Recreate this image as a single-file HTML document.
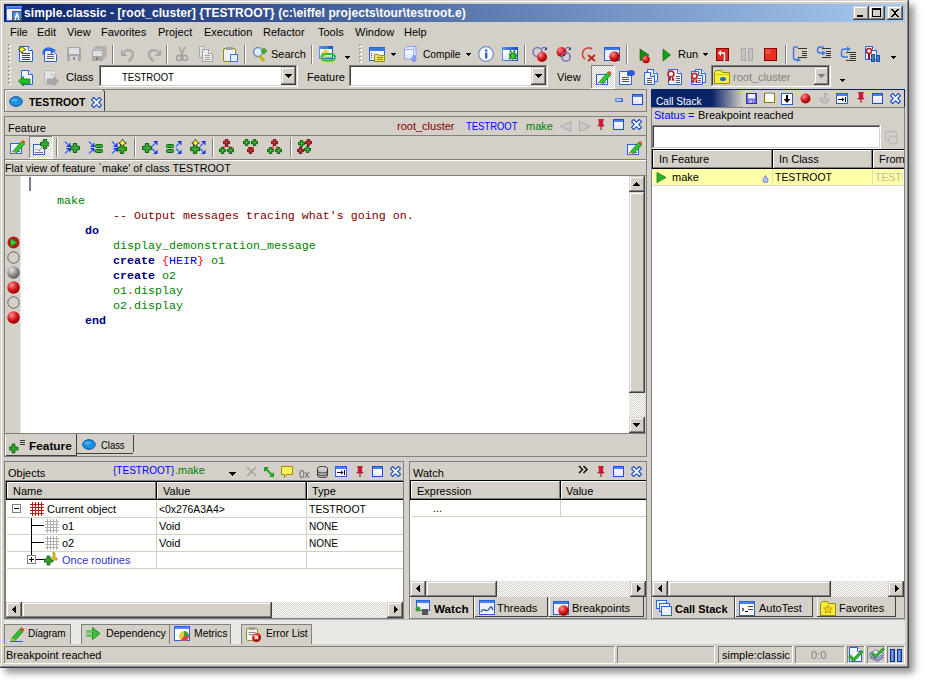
<!DOCTYPE html>
<html><head><meta charset="utf-8"><style>
html,body{margin:0;padding:0;background:#fff;width:925px;height:684px;overflow:hidden;position:relative}
body>div,body>span{position:absolute}
div>span.t{position:absolute}
.t{position:absolute;white-space:pre;line-height:13px;font-family:'Liberation Sans',sans-serif}
.t b{font-weight:bold}
</style></head><body>
<div style="left:6px;top:6px;width:903px;height:662px;box-shadow:2px 2px 7px 3px rgba(0,0,0,0.42);background:rgba(0,0,0,0.42)"></div>
<div style="left:0px;top:0px;width:909px;height:668px;background:#d4d0c8"></div>
<div style="left:0px;top:0px;width:909px;height:1px;background:#d4d0c8"></div>
<div style="left:0px;top:0px;width:1px;height:668px;background:#d4d0c8"></div>
<div style="left:0px;top:667px;width:909px;height:1px;background:#404040"></div>
<div style="left:908px;top:0px;width:1px;height:668px;background:#404040"></div>
<div style="left:1px;top:1px;width:907px;height:1px;background:#ffffff"></div>
<div style="left:1px;top:1px;width:1px;height:666px;background:#ffffff"></div>
<div style="left:1px;top:666px;width:907px;height:1px;background:#808080"></div>
<div style="left:907px;top:1px;width:1px;height:666px;background:#808080"></div>
<div style="left:4px;top:4px;width:901px;height:18px;background:linear-gradient(to right,#0a246a,#a6caf0)"></div>
<svg style="position:absolute;left:6px;top:6px" width="16" height="15" viewBox="0 0 16 15"><defs><linearGradient id="tig" x1="0" y1="0" x2="0" y2="1"><stop offset="0" stop-color="#6a9af8"/><stop offset="1" stop-color="#2a5ad8"/></linearGradient></defs><rect x="0" y="0" width="16" height="15" fill="#3a70e8"/><rect x="0" y="0" width="16" height="3" fill="url(#tig)"/><rect x="1" y="3" width="14" height="11" fill="#f0f0ff"/><rect x="6.5" y="5.5" width="9" height="9" fill="#4a90e8" stroke="#505050"/><path d="M11 6l-3.5 8h2l1.5-4 1.5 4h2z" fill="#fff"/><path d="M7 14l2-2M15 14l-2-2" stroke="#203050" stroke-width="1"/></svg>
<span class="t" style="left:24px;top:7px;font-size:12px;font-weight:bold;color:#fff;letter-spacing:0.08px">simple.classic - [root_cluster] {TESTROOT} (c:\eiffel projects\tour\testroot.e)</span>
<div style="left:853px;top:6px;width:16px;height:14px;background:#d4d0c8"></div>
<div style="left:853px;top:6px;width:16px;height:1px;background:#d4d0c8"></div>
<div style="left:853px;top:6px;width:1px;height:14px;background:#d4d0c8"></div>
<div style="left:853px;top:19px;width:16px;height:1px;background:#404040"></div>
<div style="left:868px;top:6px;width:1px;height:14px;background:#404040"></div>
<div style="left:854px;top:7px;width:14px;height:1px;background:#ffffff"></div>
<div style="left:854px;top:7px;width:1px;height:12px;background:#ffffff"></div>
<div style="left:854px;top:18px;width:14px;height:1px;background:#808080"></div>
<div style="left:867px;top:7px;width:1px;height:12px;background:#808080"></div>
<div style="left:869px;top:6px;width:16px;height:14px;background:#d4d0c8"></div>
<div style="left:869px;top:6px;width:16px;height:1px;background:#d4d0c8"></div>
<div style="left:869px;top:6px;width:1px;height:14px;background:#d4d0c8"></div>
<div style="left:869px;top:19px;width:16px;height:1px;background:#404040"></div>
<div style="left:884px;top:6px;width:1px;height:14px;background:#404040"></div>
<div style="left:870px;top:7px;width:14px;height:1px;background:#ffffff"></div>
<div style="left:870px;top:7px;width:1px;height:12px;background:#ffffff"></div>
<div style="left:870px;top:18px;width:14px;height:1px;background:#808080"></div>
<div style="left:883px;top:7px;width:1px;height:12px;background:#808080"></div>
<div style="left:887px;top:6px;width:16px;height:14px;background:#d4d0c8"></div>
<div style="left:887px;top:6px;width:16px;height:1px;background:#d4d0c8"></div>
<div style="left:887px;top:6px;width:1px;height:14px;background:#d4d0c8"></div>
<div style="left:887px;top:19px;width:16px;height:1px;background:#404040"></div>
<div style="left:902px;top:6px;width:1px;height:14px;background:#404040"></div>
<div style="left:888px;top:7px;width:14px;height:1px;background:#ffffff"></div>
<div style="left:888px;top:7px;width:1px;height:12px;background:#ffffff"></div>
<div style="left:888px;top:18px;width:14px;height:1px;background:#808080"></div>
<div style="left:901px;top:7px;width:1px;height:12px;background:#808080"></div>
<div style="left:857px;top:15px;width:6px;height:2px;background:#000"></div>
<div style="left:872px;top:8px;width:9px;height:1px;background:#000"></div>
<div style="left:872px;top:8px;width:1px;height:9px;background:#000"></div>
<div style="left:872px;top:16px;width:9px;height:1px;background:#000"></div>
<div style="left:880px;top:8px;width:1px;height:9px;background:#000"></div>
<div style="left:872px;top:9px;width:9px;height:1px;background:#000"></div>
<svg style="position:absolute;left:890px;top:8px" width="10" height="10" viewBox="0 0 10 10" shape-rendering="crispEdges"><path d="M1 1h2v1h1v1h2v-1h1v-1h2v1h-1v1h-1v1h-1v2h1v1h1v1h1v1h-2v-1h-1v-1h-2v1h-1v1h-2v-1h1v-1h1v-1h1v-2h-1v-1h-1v-1h-1z" fill="#000"/></svg>
<span class="t" style="left:10px;top:26px;font-size:11px;color:#000;">File</span>
<span class="t" style="left:37px;top:26px;font-size:11px;color:#000;">Edit</span>
<span class="t" style="left:67px;top:26px;font-size:11px;color:#000;">View</span>
<span class="t" style="left:101px;top:26px;font-size:11px;color:#000;">Favorites</span>
<span class="t" style="left:158px;top:26px;font-size:11px;color:#000;">Project</span>
<span class="t" style="left:204px;top:26px;font-size:11px;color:#000;">Execution</span>
<span class="t" style="left:263px;top:26px;font-size:11px;color:#000;">Refactor</span>
<span class="t" style="left:318px;top:26px;font-size:11px;color:#000;">Tools</span>
<span class="t" style="left:355px;top:26px;font-size:11px;color:#000;">Window</span>
<span class="t" style="left:404px;top:26px;font-size:11px;color:#000;">Help</span>
<svg style="position:absolute;left:8px;top:44px" width="3" height="20" viewBox="0 0 3 20" shape-rendering="crispEdges"><rect x="1" y="1" width="2" height="2" fill="#fff"/><rect x="1" y="1" width="1" height="1" fill="#fff"/><rect x="0" y="0" width="2" height="2" fill="#a0a0a0"/><rect x="1" y="1" width="1" height="1" fill="#d4d0c8"/><rect x="1" y="5" width="2" height="2" fill="#fff"/><rect x="1" y="5" width="1" height="1" fill="#fff"/><rect x="0" y="4" width="2" height="2" fill="#a0a0a0"/><rect x="1" y="5" width="1" height="1" fill="#d4d0c8"/><rect x="1" y="9" width="2" height="2" fill="#fff"/><rect x="1" y="9" width="1" height="1" fill="#fff"/><rect x="0" y="8" width="2" height="2" fill="#a0a0a0"/><rect x="1" y="9" width="1" height="1" fill="#d4d0c8"/><rect x="1" y="13" width="2" height="2" fill="#fff"/><rect x="1" y="13" width="1" height="1" fill="#fff"/><rect x="0" y="12" width="2" height="2" fill="#a0a0a0"/><rect x="1" y="13" width="1" height="1" fill="#d4d0c8"/><rect x="1" y="17" width="2" height="2" fill="#fff"/><rect x="1" y="17" width="1" height="1" fill="#fff"/><rect x="0" y="16" width="2" height="2" fill="#a0a0a0"/><rect x="1" y="17" width="1" height="1" fill="#d4d0c8"/></svg>
<svg style="position:absolute;left:18px;top:46px" width="16" height="16" viewBox="0 0 16 16"><path d="M1.5 0.5h9l4 4v11h-13z" fill="#f4f4ff" stroke="#2a62d8" stroke-width="1"/><path d="M10.5 0.5v4h4" fill="#fff" stroke="#2a62d8" stroke-width="1"/><rect x="4" y="7" width="8" height="1" fill="#404040"/><rect x="4" y="9" width="8" height="1" fill="#404040"/><rect x="4" y="11" width="8" height="1" fill="#404040"/><rect x="4" y="13" width="8" height="1" fill="#404040"/><path d="M4 -0.2999999999999998Q4.8 2.7 7.8 3.5Q4.8 4.3 4 7.3Q3.2 4.3 0.20000000000000018 3.5Q3.2 2.7 4 -0.2999999999999998z" fill="#ffff30" stroke="#303000" stroke-width=".8"/></svg>
<svg style="position:absolute;left:42px;top:46px" width="16" height="16" viewBox="0 0 16 16"><path d="M2.5 4.5h8l4 4v7h-12z" fill="#f4f4ff" stroke="#2a62d8" stroke-width="1"/><rect x="5" y="8" width="7" height="1" fill="#606060"/><rect x="5" y="10" width="7" height="1" fill="#606060"/><rect x="5" y="12" width="7" height="1" fill="#606060"/><path d="M1.8 8.5C1 3 6 1 10 4" fill="none" stroke="#2a6ae8" stroke-width="2.6"/><path d="M8 1.5l6 2.5-5 4.5z" fill="#2a6ae8"/></svg>
<svg style="position:absolute;left:66px;top:46px" width="16" height="16" viewBox="0 0 16 16"><rect x="1" y="1" width="14" height="14" rx="1" fill="#a8a8a8"/><rect x="3" y="2" width="10" height="6" fill="#e0e0e0"/><rect x="4" y="10" width="8" height="5" fill="#d0d0d0"/><rect x="7" y="11" width="2" height="3" fill="#909090"/></svg>
<svg style="position:absolute;left:91px;top:46px" width="16" height="16" viewBox="0 0 16 16"><rect x="5" y="0" width="10" height="10" fill="#c8c8c8" stroke="#a0a0a0"/><rect x="3" y="2" width="10" height="10" fill="#c8c8c8" stroke="#a0a0a0"/><rect x="1" y="4" width="11" height="11" fill="#a8a8a8"/><rect x="2" y="5" width="9" height="5" fill="#e0e0e0"/><rect x="5" y="11" width="2" height="3" fill="#808080"/></svg>
<div style="left:112px;top:45px;width:1px;height:19px;background:#808080"></div>
<div style="left:113px;top:45px;width:1px;height:19px;background:#ffffff"></div>
<svg style="position:absolute;left:120px;top:46px" width="16" height="16" viewBox="0 0 16 16"><g><path d="M4 5.5C10 2 15 6 12 11.5 11 13 10 14 8.5 15" fill="none" stroke="#a8a8a8" stroke-width="2.4"/><path d="M1 3.5v6.5h6.5z" fill="#a8a8a8"/></g></svg>
<svg style="position:absolute;left:146px;top:46px" width="16" height="16" viewBox="0 0 16 16"><g transform="translate(16,0) scale(-1,1)"><path d="M4 5.5C10 2 15 6 12 11.5 11 13 10 14 8.5 15" fill="none" stroke="#a8a8a8" stroke-width="2.4"/><path d="M1 3.5v6.5h6.5z" fill="#a8a8a8"/></g></svg>
<div style="left:166px;top:45px;width:1px;height:19px;background:#808080"></div>
<div style="left:167px;top:45px;width:1px;height:19px;background:#ffffff"></div>
<svg style="position:absolute;left:174px;top:46px" width="16" height="16" viewBox="0 0 16 16"><path d="M5 1l4 9M11 1L7 10" stroke="#a0a0a0" stroke-width="1.5"/><circle cx="5" cy="12" r="2.5" fill="none" stroke="#a0a0a0" stroke-width="1.5"/><circle cx="11" cy="12" r="2.5" fill="none" stroke="#a0a0a0" stroke-width="1.5"/></svg>
<svg style="position:absolute;left:198px;top:46px" width="16" height="16" viewBox="0 0 16 16"><path d="M1.5 0.5h5l4 4v7h-9z" fill="#e4e4e4" stroke="#a8a8a8" stroke-width="1"/><path d="M6.5 0.5v4h4" fill="#fff" stroke="#a8a8a8" stroke-width="1"/><path d="M4.5 3.5h6l4 4v8h-10z" fill="#e8e8e8" stroke="#a0a0a0" stroke-width="1"/><path d="M10.5 3.5v4h4" fill="#fff" stroke="#a0a0a0" stroke-width="1"/><rect x="7" y="9" width="5" height="1" fill="#a0a0a0"/><rect x="7" y="11" width="5" height="1" fill="#a0a0a0"/><rect x="7" y="13" width="5" height="1" fill="#a0a0a0"/></svg>
<svg style="position:absolute;left:222px;top:46px" width="16" height="16" viewBox="0 0 16 16"><rect x="1.5" y="2.5" width="12" height="13" rx="1.5" fill="#f0f0f0" stroke="#8a8a00"/><rect x="4" y="1" width="7" height="3" fill="#a0a0a0"/><rect x="8.5" y="8.5" width="7" height="7" fill="#e8eefc" stroke="#3a7ae8"/></svg>
<div style="left:244px;top:45px;width:1px;height:19px;background:#808080"></div>
<div style="left:245px;top:45px;width:1px;height:19px;background:#ffffff"></div>
<svg style="position:absolute;left:252px;top:46px" width="16" height="16" viewBox="0 0 16 16"><circle cx="6" cy="6" r="4.5" fill="#d8ecff" stroke="#7090b0" stroke-width="1.5"/><path d="M8 10l4 5" stroke="#c8b400" stroke-width="3"/><path d="M9 5h6M12 2v6" stroke="#4aa020" stroke-width="2.6"/></svg>
<span class="t" style="left:271px;top:48px;font-size:11px;color:#000;">Search</span>
<div style="left:311px;top:45px;width:1px;height:19px;background:#808080"></div>
<div style="left:312px;top:45px;width:1px;height:19px;background:#ffffff"></div>
<svg style="position:absolute;left:316px;top:44px" width="20" height="18" viewBox="0 0 20 18"><defs><linearGradient id="g1" x1="0" y1="0" x2="1" y2="0"><stop offset="0" stop-color="#5a90f0"/><stop offset="1" stop-color="#1a50d0"/></linearGradient></defs><defs><linearGradient id="g2" x1="0" y1="0" x2="0" y2="1"><stop offset="0" stop-color="#ffffff"/><stop offset="1" stop-color="#e0e4ff"/></linearGradient></defs><rect x="3" y="2" width="14" height="13" fill="url(#g1)"/><rect x="4" y="5" width="12" height="9" fill="url(#g2)"/><path d="M11.5 3L6 9.5h3L6.5 15l6-7h-3z" fill="#fff020" stroke="#b09000" stroke-width=".5"/><rect x="5.5" y="10" width="13.5" height="6.5" rx="3.2" fill="none" stroke="#30c030" stroke-width="2"/><rect x="9" y="12.6" width="6.5" height="1.4" fill="#60e060"/></svg>
<svg style="position:absolute;left:345px;top:56px" width="5" height="3" viewBox="0 0 5 3" shape-rendering="crispEdges"><path d="M0 0h5v1h-1v1h-1v1h-1v-1h-1v-1h-1z" fill="#000"/></svg>
<svg style="position:absolute;left:359px;top:44px" width="3" height="20" viewBox="0 0 3 20" shape-rendering="crispEdges"><rect x="1" y="1" width="2" height="2" fill="#fff"/><rect x="1" y="1" width="1" height="1" fill="#fff"/><rect x="0" y="0" width="2" height="2" fill="#a0a0a0"/><rect x="1" y="1" width="1" height="1" fill="#d4d0c8"/><rect x="1" y="5" width="2" height="2" fill="#fff"/><rect x="1" y="5" width="1" height="1" fill="#fff"/><rect x="0" y="4" width="2" height="2" fill="#a0a0a0"/><rect x="1" y="5" width="1" height="1" fill="#d4d0c8"/><rect x="1" y="9" width="2" height="2" fill="#fff"/><rect x="1" y="9" width="1" height="1" fill="#fff"/><rect x="0" y="8" width="2" height="2" fill="#a0a0a0"/><rect x="1" y="9" width="1" height="1" fill="#d4d0c8"/><rect x="1" y="13" width="2" height="2" fill="#fff"/><rect x="1" y="13" width="1" height="1" fill="#fff"/><rect x="0" y="12" width="2" height="2" fill="#a0a0a0"/><rect x="1" y="13" width="1" height="1" fill="#d4d0c8"/><rect x="1" y="17" width="2" height="2" fill="#fff"/><rect x="1" y="17" width="1" height="1" fill="#fff"/><rect x="0" y="16" width="2" height="2" fill="#a0a0a0"/><rect x="1" y="17" width="1" height="1" fill="#d4d0c8"/></svg>
<svg style="position:absolute;left:369px;top:46px" width="16" height="16" viewBox="0 0 16 16"><rect x="0.5" y="1.5" width="15" height="13" fill="#f4f4ff" stroke="#2a62d8"/><rect x="1" y="2" width="15" height="3" fill="#3a7ae8"/><rect x="2" y="7" width="1" height="1" fill="#444"/><rect x="2" y="9" width="1" height="1" fill="#444"/><rect x="2" y="11" width="1" height="1" fill="#444"/><path d="M5.5 8.5h4l1 1h5v6h-10z" fill="#f0e060" stroke="#909000"/><rect x="8" y="11" width="6" height="1" fill="#909000"/><rect x="8" y="13" width="6" height="1" fill="#909000"/></svg>
<svg style="position:absolute;left:391px;top:53px" width="5" height="3" viewBox="0 0 5 3" shape-rendering="crispEdges"><path d="M0 0h5v1h-1v1h-1v1h-1v-1h-1v-1h-1z" fill="#000"/></svg>
<svg style="position:absolute;left:400px;top:45px" width="18" height="17" viewBox="0 0 18 17"><path d="M4.5 3.5l2.5-2h9v9.5l-3 3H4.5z" fill="#e4ecff" stroke="#8c9cf8"/><path d="M4.5 4.5h9v9.5M13.5 4.5l3-3" fill="none" stroke="#a0aef8"/><path d="M5 5h8v4H5z" fill="#f4f8ff"/><path d="M14 10c-1.5 2-2.2 3-2.2 4.2a2.2 2.2 0 0 0 4.4 0c0-1.2-.7-2.2-2.2-4.2z" fill="#8ca0ff" stroke="#5a6ae0" stroke-width=".6"/></svg>
<span class="t" style="left:423px;top:48px;font-size:11px;color:#000;transform:scaleX(0.9250);transform-origin:0 0;">Compile</span>
<svg style="position:absolute;left:466px;top:53px" width="5" height="3" viewBox="0 0 5 3" shape-rendering="crispEdges"><path d="M0 0h5v1h-1v1h-1v1h-1v-1h-1v-1h-1z" fill="#000"/></svg>
<svg style="position:absolute;left:478px;top:46px" width="16" height="16" viewBox="0 0 16 16"><circle cx="8" cy="8" r="7.3" fill="#fff" stroke="#6a8ac8" stroke-width="1.2"/><rect x="7" y="6.5" width="2.4" height="6" fill="#3a5ac8"/><rect x="7" y="3.5" width="2.4" height="2" fill="#3a5ac8"/></svg>
<svg style="position:absolute;left:502px;top:46px" width="16" height="16" viewBox="0 0 16 16"><defs><linearGradient id="g3" x1="0" y1="0" x2="1" y2="0"><stop offset="0" stop-color="#5a90f0"/><stop offset="1" stop-color="#1a50d0"/></linearGradient></defs><defs><linearGradient id="g4" x1="0" y1="0" x2="0" y2="1"><stop offset="0" stop-color="#ffffff"/><stop offset="1" stop-color="#e0e4ff"/></linearGradient></defs><rect x="0" y="1" width="16" height="14" fill="url(#g3)"/><rect x="1" y="4" width="14" height="10" fill="url(#g4)"/><path d="M8 4.5l1.5 2M13 4.5l-1.5 2M7 7.5l2 1.5M14.5 7.5l-2 1.5M7 10h2M13 10h2M7 13l2-1.5M14.5 13l-2-1.5" stroke="#0a700a" stroke-width="1.5"/><ellipse cx="11" cy="10" rx="2.6" ry="3.2" fill="#38c838" stroke="#0a700a" stroke-width=".8"/></svg>
<div style="left:524px;top:45px;width:1px;height:19px;background:#808080"></div>
<div style="left:525px;top:45px;width:1px;height:19px;background:#ffffff"></div>
<svg style="position:absolute;left:532px;top:46px" width="16" height="16" viewBox="0 0 16 16"><circle cx="5.5" cy="6" r="4.5" fill="none" stroke="#7a70c0" stroke-width="1.6"/><defs><radialGradient id="g5" cx="35%" cy="30%" r="70%"><stop offset="0" stop-color="#ff9090"/><stop offset="0.6" stop-color="#d41818"/><stop offset="1" stop-color="#980000"/></radialGradient></defs><circle cx="10" cy="11" r="5" fill="url(#g5)"/><path d="M10 2.5c1.5-1.5 3.5-1.5 4.5 .5" fill="none" stroke="#204890" stroke-width="1"/><path d="M15 1v3h-3z" fill="#204890"/></svg>
<svg style="position:absolute;left:556px;top:46px" width="16" height="16" viewBox="0 0 16 16"><defs><radialGradient id="g6" cx="35%" cy="30%" r="70%"><stop offset="0" stop-color="#ff9090"/><stop offset="0.6" stop-color="#d41818"/><stop offset="1" stop-color="#980000"/></radialGradient></defs><circle cx="5.5" cy="6" r="5" fill="url(#g6)"/><circle cx="10" cy="11" r="4.2" fill="none" stroke="#7a70c0" stroke-width="1.6"/><path d="M10 2.5c1.5-1.5 3.5-1.5 4.5 .5" fill="none" stroke="#204890" stroke-width="1"/><path d="M15 1v3h-3z" fill="#204890"/></svg>
<svg style="position:absolute;left:580px;top:46px" width="16" height="16" viewBox="0 0 16 16"><path d="M12 3A6 6 0 1 0 5 13" fill="none" stroke="#d84040" stroke-width="1.6"/><path d="M8 9l7 6M15 9l-7 6" stroke="#c02020" stroke-width="1.8"/></svg>
<svg style="position:absolute;left:604px;top:46px" width="16" height="16" viewBox="0 0 16 16"><rect x="0.5" y="1.5" width="15" height="13" fill="#eef0ff" stroke="#2a62d8"/><rect x="1" y="2" width="14" height="2" fill="#3a7ae8"/><defs><radialGradient id="g7" cx="35%" cy="30%" r="70%"><stop offset="0" stop-color="#ff9090"/><stop offset="0.6" stop-color="#d41818"/><stop offset="1" stop-color="#980000"/></radialGradient></defs><circle cx="10.5" cy="10.5" r="5.2" fill="url(#g7)"/></svg>
<div style="left:626px;top:45px;width:1px;height:19px;background:#808080"></div>
<div style="left:627px;top:45px;width:1px;height:19px;background:#ffffff"></div>
<svg style="position:absolute;left:639px;top:48px" width="16" height="16" viewBox="0 0 16 16"><path d="M1 1v12l9-6z" fill="#109010" stroke="#006000" stroke-width=".6"/><defs><radialGradient id="g8" cx="35%" cy="30%" r="70%"><stop offset="0" stop-color="#ff9090"/><stop offset="0.6" stop-color="#d41818"/><stop offset="1" stop-color="#980000"/></radialGradient></defs><circle cx="7" cy="11.5" r="3.8" fill="url(#g8)"/></svg>
<svg style="position:absolute;left:662px;top:48px" width="16" height="16" viewBox="0 0 16 16"><path d="M1 1v12l7.5-6z" fill="#10a010" stroke="#006000" stroke-width=".6"/></svg>
<span class="t" style="left:678px;top:48px;font-size:11px;color:#000;">Run</span>
<svg style="position:absolute;left:703px;top:53px" width="5" height="3" viewBox="0 0 5 3" shape-rendering="crispEdges"><path d="M0 0h5v1h-1v1h-1v1h-1v-1h-1v-1h-1z" fill="#000"/></svg>
<svg style="position:absolute;left:716px;top:48px" width="14" height="14" viewBox="0 0 14 14"><rect x="0.5" y="0.5" width="12" height="12" fill="#e02a20" stroke="#900000"/><path d="M8.5 13V5H4" fill="none" stroke="#fff" stroke-width="1.4"/><path d="M2 5l3-3v6z" fill="#fff"/></svg>
<svg style="position:absolute;left:741px;top:48px" width="13" height="13" viewBox="0 0 13 13"><rect x="0.5" y="0.5" width="4" height="12" fill="#c4c4c4" stroke="#a8a8a8"/><rect x="7.5" y="0.5" width="4" height="12" fill="#c4c4c4" stroke="#a8a8a8"/></svg>
<svg style="position:absolute;left:764px;top:48px" width="14" height="14" viewBox="0 0 14 14"><rect x="0.5" y="0.5" width="12" height="12" fill="#e83020" stroke="#900000"/><rect x="1" y="1" width="6" height="5" fill="#f06050" opacity=".6"/></svg>
<div style="left:785px;top:45px;width:1px;height:19px;background:#808080"></div>
<div style="left:786px;top:45px;width:1px;height:19px;background:#ffffff"></div>
<svg style="position:absolute;left:792px;top:46px" width="16" height="16" viewBox="0 0 16 16"><path d="M6 1H2.5Q1.5 1 1.5 2.5v9Q1.5 14 4 14h3" fill="none" stroke="#3a7ae8" stroke-width="1.4"/><path d="M5 11.5l4 2.5-4 2z" fill="#3a7ae8"/><rect x="6" y="2" width="9" height="1" fill="#333"/><rect x="10" y="5" width="5" height="1" fill="#333"/><rect x="10" y="7" width="5" height="1" fill="#333"/><rect x="10" y="9" width="5" height="1" fill="#333"/><rect x="6" y="11" width="9" height="1" fill="#333"/></svg>
<svg style="position:absolute;left:816px;top:46px" width="16" height="16" viewBox="0 0 16 16"><path d="M8 1H4Q1.5 1 1.5 4t2.5 3h4" fill="none" stroke="#3a7ae8" stroke-width="1.4"/><path d="M6 4.5l4 2.5-4 2.5z" fill="#3a7ae8"/><rect x="6" y="2" width="9" height="1" fill="#333"/><rect x="10" y="5" width="5" height="1" fill="#333"/><rect x="10" y="7" width="5" height="1" fill="#333"/><rect x="10" y="9" width="5" height="1" fill="#333"/><rect x="6" y="11" width="9" height="1" fill="#333"/></svg>
<svg style="position:absolute;left:840px;top:46px" width="16" height="16" viewBox="0 0 16 16"><path d="M8 3H4Q1.5 3 1.5 6v3Q1.5 11 4 11h4" fill="none" stroke="#3a7ae8" stroke-width="1.4"/><path d="M7 0.5l4 2.5-4 2.5z" fill="#3a7ae8"/><rect x="6" y="6" width="10" height="1" fill="#333"/><rect x="10" y="8" width="6" height="1" fill="#333"/><rect x="10" y="10" width="6" height="1" fill="#333"/><rect x="10" y="12" width="6" height="1" fill="#333"/><rect x="6" y="14" width="10" height="1" fill="#333"/></svg>
<svg style="position:absolute;left:865px;top:46px" width="16" height="16" viewBox="0 0 16 16"><path d="M0.5 0.5h7l4 4v9h-11z" fill="#f4f4ff" stroke="#2a62d8" stroke-width="1"/><path d="M7.5 0.5v4h4" fill="#fff" stroke="#2a62d8" stroke-width="1"/><circle cx="4" cy="5" r="2.5" fill="#fff" stroke="#b02020" stroke-width="1.5"/><path d="M4 7v6" stroke="#901818" stroke-width="2"/><rect x="6.5" y="8.5" width="3" height="7" fill="#3a80d0" stroke="#1a50a0"/><rect x="11.5" y="9.5" width="3" height="6" fill="#3a80d0" stroke="#1a50a0"/></svg>
<svg style="position:absolute;left:891px;top:56px" width="5" height="3" viewBox="0 0 5 3" shape-rendering="crispEdges"><path d="M0 0h5v1h-1v1h-1v1h-1v-1h-1v-1h-1z" fill="#000"/></svg>
<svg style="position:absolute;left:8px;top:66px" width="3" height="20" viewBox="0 0 3 20" shape-rendering="crispEdges"><rect x="1" y="1" width="2" height="2" fill="#fff"/><rect x="1" y="1" width="1" height="1" fill="#fff"/><rect x="0" y="0" width="2" height="2" fill="#a0a0a0"/><rect x="1" y="1" width="1" height="1" fill="#d4d0c8"/><rect x="1" y="5" width="2" height="2" fill="#fff"/><rect x="1" y="5" width="1" height="1" fill="#fff"/><rect x="0" y="4" width="2" height="2" fill="#a0a0a0"/><rect x="1" y="5" width="1" height="1" fill="#d4d0c8"/><rect x="1" y="9" width="2" height="2" fill="#fff"/><rect x="1" y="9" width="1" height="1" fill="#fff"/><rect x="0" y="8" width="2" height="2" fill="#a0a0a0"/><rect x="1" y="9" width="1" height="1" fill="#d4d0c8"/><rect x="1" y="13" width="2" height="2" fill="#fff"/><rect x="1" y="13" width="1" height="1" fill="#fff"/><rect x="0" y="12" width="2" height="2" fill="#a0a0a0"/><rect x="1" y="13" width="1" height="1" fill="#d4d0c8"/><rect x="1" y="17" width="2" height="2" fill="#fff"/><rect x="1" y="17" width="1" height="1" fill="#fff"/><rect x="0" y="16" width="2" height="2" fill="#a0a0a0"/><rect x="1" y="17" width="1" height="1" fill="#d4d0c8"/></svg>
<svg style="position:absolute;left:18px;top:70px" width="16" height="16" viewBox="0 0 16 16"><path d="M3.5 0.5h7l4 4v10h-11z" fill="#f4f4ff" stroke="#2a62d8" stroke-width="1"/><path d="M10.5 0.5v4h4" fill="#fff" stroke="#2a62d8" stroke-width="1"/><path d="M.5 11L5.5 6.5V9H12v4.5H5.5V16z" fill="#20c020" stroke="#0a800a" stroke-width=".8"/></svg>
<svg style="position:absolute;left:43px;top:70px" width="16" height="16" viewBox="0 0 16 16"><path d="M1.5 0.5h7l4 4v10h-11z" fill="#e4e4e4" stroke="#b8b8b8" stroke-width="1"/><path d="M8.5 0.5v4h4" fill="#fff" stroke="#b8b8b8" stroke-width="1"/><path d="M15.5 11L10.5 6.5V9H4v4.5h6.5V16z" fill="#a8a8a8" stroke="#a0a0a0" stroke-width=".8"/></svg>
<span class="t" style="left:66px;top:71px;font-size:11px;color:#000;">Class</span>
<div style="left:99px;top:65px;width:199px;height:22px;background:#fff"></div>
<div style="left:99px;top:65px;width:199px;height:1px;background:#808080"></div>
<div style="left:99px;top:65px;width:1px;height:22px;background:#808080"></div>
<div style="left:99px;top:86px;width:199px;height:1px;background:#ffffff"></div>
<div style="left:297px;top:65px;width:1px;height:22px;background:#ffffff"></div>
<div style="left:100px;top:66px;width:197px;height:1px;background:#404040"></div>
<div style="left:100px;top:66px;width:1px;height:20px;background:#404040"></div>
<div style="left:100px;top:85px;width:197px;height:1px;background:#d4d0c8"></div>
<div style="left:296px;top:66px;width:1px;height:20px;background:#d4d0c8"></div>
<div style="left:281px;top:67px;width:15px;height:18px;background:#d4d0c8"></div>
<div style="left:281px;top:67px;width:15px;height:1px;background:#d4d0c8"></div>
<div style="left:281px;top:67px;width:1px;height:18px;background:#d4d0c8"></div>
<div style="left:281px;top:84px;width:15px;height:1px;background:#404040"></div>
<div style="left:295px;top:67px;width:1px;height:18px;background:#404040"></div>
<div style="left:282px;top:68px;width:13px;height:1px;background:#ffffff"></div>
<div style="left:282px;top:68px;width:1px;height:16px;background:#ffffff"></div>
<div style="left:282px;top:83px;width:13px;height:1px;background:#808080"></div>
<div style="left:294px;top:68px;width:1px;height:16px;background:#808080"></div>
<svg style="position:absolute;left:285px;top:74px" width="7" height="4" viewBox="0 0 7 4" shape-rendering="crispEdges"><path d="M0 0h7v1h-1v1h-1v1h-1v1h-1v-1h-1v-1h-1v-1h-1z" fill="#000"/></svg>
<span class="t" style="left:122px;top:71px;font-size:11px;color:#000;transform:scaleX(0.8667);transform-origin:0 0;">TESTROOT</span>
<span class="t" style="left:307px;top:71px;font-size:11px;color:#000;">Feature</span>
<div style="left:349px;top:65px;width:199px;height:22px;background:#fff"></div>
<div style="left:349px;top:65px;width:199px;height:1px;background:#808080"></div>
<div style="left:349px;top:65px;width:1px;height:22px;background:#808080"></div>
<div style="left:349px;top:86px;width:199px;height:1px;background:#ffffff"></div>
<div style="left:547px;top:65px;width:1px;height:22px;background:#ffffff"></div>
<div style="left:350px;top:66px;width:197px;height:1px;background:#404040"></div>
<div style="left:350px;top:66px;width:1px;height:20px;background:#404040"></div>
<div style="left:350px;top:85px;width:197px;height:1px;background:#d4d0c8"></div>
<div style="left:546px;top:66px;width:1px;height:20px;background:#d4d0c8"></div>
<div style="left:531px;top:67px;width:15px;height:18px;background:#d4d0c8"></div>
<div style="left:531px;top:67px;width:15px;height:1px;background:#d4d0c8"></div>
<div style="left:531px;top:67px;width:1px;height:18px;background:#d4d0c8"></div>
<div style="left:531px;top:84px;width:15px;height:1px;background:#404040"></div>
<div style="left:545px;top:67px;width:1px;height:18px;background:#404040"></div>
<div style="left:532px;top:68px;width:13px;height:1px;background:#ffffff"></div>
<div style="left:532px;top:68px;width:1px;height:16px;background:#ffffff"></div>
<div style="left:532px;top:83px;width:13px;height:1px;background:#808080"></div>
<div style="left:544px;top:68px;width:1px;height:16px;background:#808080"></div>
<svg style="position:absolute;left:535px;top:74px" width="7" height="4" viewBox="0 0 7 4" shape-rendering="crispEdges"><path d="M0 0h7v1h-1v1h-1v1h-1v1h-1v-1h-1v-1h-1v-1h-1z" fill="#000"/></svg>
<span class="t" style="left:557px;top:71px;font-size:11px;color:#000;">View</span>
<div style="left:591px;top:65px;width:24px;height:24px;background-color:#fff;background-image:linear-gradient(45deg,#d4d0c8 25%,transparent 25%,transparent 75%,#d4d0c8 75%),linear-gradient(45deg,#d4d0c8 25%,transparent 25%,transparent 75%,#d4d0c8 75%);background-size:2px 2px;background-position:0 0,1px 1px"></div>
<div style="left:591px;top:65px;width:24px;height:1px;background:#808080"></div>
<div style="left:591px;top:65px;width:1px;height:24px;background:#808080"></div>
<div style="left:591px;top:88px;width:24px;height:1px;background:#ffffff"></div>
<div style="left:614px;top:65px;width:1px;height:24px;background:#ffffff"></div>
<svg style="position:absolute;left:595px;top:69px" width="16" height="16" viewBox="0 0 16 16"><rect x="1.5" y="5.5" width="11" height="10" fill="#f0f0ff" stroke="#2a62e0"/><rect x="3" y="13" width="8" height="1" fill="#707070"/><path d="M4.5 12.5l8-9 3 2.5-8 9z" fill="#30c830" stroke="#107010" stroke-width=".7"/><path d="M12.5 3.5l1.5-1.5 2.5 2-1 2z" fill="#f04818"/><path d="M4.5 12.5l3 2.5-3.5.8z" fill="#d8c030"/></svg>
<svg style="position:absolute;left:619px;top:69px" width="16" height="16" viewBox="0 0 16 16"><path d="M0.5 2.5h8l4 4v9h-12z" fill="#f4f4ff" stroke="#2a62d8" stroke-width="1"/><path d="M8.5 2.5v4h4" fill="#fff" stroke="#2a62d8" stroke-width="1"/><rect x="3" y="8" width="7" height="1" fill="#555"/><rect x="3" y="10" width="7" height="1" fill="#555"/><rect x="3" y="12" width="7" height="1" fill="#555"/><ellipse cx="12" cy="4" rx="4" ry="3" fill="#2a5ad8"/></svg>
<svg style="position:absolute;left:643px;top:69px" width="16" height="16" viewBox="0 0 16 16"><path d="M4.5 0.5h6l4 4v8h-10z" fill="#f4f4ff" stroke="#2a62d8" stroke-width="1"/><path d="M10.5 0.5v4h4" fill="#fff" stroke="#2a62d8" stroke-width="1"/><rect x="7" y="6" width="5" height="1" fill="#555"/><rect x="7" y="8" width="5" height="1" fill="#555"/><rect x="7" y="10" width="5" height="1" fill="#555"/><path d="M1.5 3.5h6l4 4v8h-10z" fill="#f4f4ff" stroke="#2a62d8" stroke-width="1"/><path d="M7.5 3.5v4h4" fill="#fff" stroke="#2a62d8" stroke-width="1"/><rect x="4" y="9" width="5" height="1" fill="#555"/><rect x="4" y="11" width="5" height="1" fill="#555"/><rect x="4" y="13" width="5" height="1" fill="#555"/></svg>
<svg style="position:absolute;left:666px;top:69px" width="16" height="16" viewBox="0 0 16 16"><path d="M2.5 0.5h9l4 4v11h-13z" fill="#f4f4ff" stroke="#2a62d8" stroke-width="1"/><path d="M11.5 0.5v4h4" fill="#fff" stroke="#2a62d8" stroke-width="1"/><rect x="10" y="7" width="4" height="1" fill="#606060"/><rect x="10" y="9" width="4" height="1" fill="#606060"/><rect x="10" y="11" width="4" height="1" fill="#606060"/><rect x="10" y="13" width="4" height="1" fill="#606060"/><path d="M4 6l-2 6h1.5l1-1 1 1.5 1-6zM6 6l2.5 5.5-1.5.5-1-1-1 1.5-.5-6z" fill="#a01818"/><circle cx="5" cy="5" r="3.8" fill="#c02828"/><circle cx="5" cy="5" r="2.1" fill="#fff"/></svg>
<svg style="position:absolute;left:690px;top:69px" width="16" height="16" viewBox="0 0 16 16"><path d="M5.5 0.5h6l4 4v9h-10z" fill="#f4f4ff" stroke="#2a62d8" stroke-width="1"/><path d="M11.5 0.5v4h4" fill="#fff" stroke="#2a62d8" stroke-width="1"/><path d="M1.5 2.5h7l4 4v9h-11z" fill="#f4f4ff" stroke="#2a62d8" stroke-width="1"/><path d="M8.5 2.5v4h4" fill="#fff" stroke="#2a62d8" stroke-width="1"/><rect x="8" y="9" width="3" height="1" fill="#606060"/><rect x="8" y="11" width="3" height="1" fill="#606060"/><rect x="8" y="13" width="3" height="1" fill="#606060"/><path d="M3.5 8l-2 6h1.5l1-1 1 1.5 1-6zM5.5 8l2.5 5.5-1.5.5-1-1-1 1.5-.5-6z" fill="#a01818"/><circle cx="4.5" cy="7" r="3.5" fill="#c02828"/><circle cx="4.5" cy="7" r="1.7999999999999998" fill="#fff"/></svg>
<div style="left:711px;top:65px;width:120px;height:22px;background:#d4d0c8"></div>
<div style="left:711px;top:65px;width:120px;height:1px;background:#808080"></div>
<div style="left:711px;top:65px;width:1px;height:22px;background:#808080"></div>
<div style="left:711px;top:86px;width:120px;height:1px;background:#ffffff"></div>
<div style="left:830px;top:65px;width:1px;height:22px;background:#ffffff"></div>
<div style="left:712px;top:66px;width:118px;height:1px;background:#404040"></div>
<div style="left:712px;top:66px;width:1px;height:20px;background:#404040"></div>
<div style="left:712px;top:85px;width:118px;height:1px;background:#d4d0c8"></div>
<div style="left:829px;top:66px;width:1px;height:20px;background:#d4d0c8"></div>
<div style="left:814px;top:67px;width:15px;height:18px;background:#d4d0c8"></div>
<div style="left:814px;top:67px;width:15px;height:1px;background:#d4d0c8"></div>
<div style="left:814px;top:67px;width:1px;height:18px;background:#d4d0c8"></div>
<div style="left:814px;top:84px;width:15px;height:1px;background:#404040"></div>
<div style="left:828px;top:67px;width:1px;height:18px;background:#404040"></div>
<div style="left:815px;top:68px;width:13px;height:1px;background:#ffffff"></div>
<div style="left:815px;top:68px;width:1px;height:16px;background:#ffffff"></div>
<div style="left:815px;top:83px;width:13px;height:1px;background:#808080"></div>
<div style="left:827px;top:68px;width:1px;height:16px;background:#808080"></div>
<svg style="position:absolute;left:818px;top:74px" width="7" height="4" viewBox="0 0 7 4" shape-rendering="crispEdges"><path d="M0 0h7v1h-1v1h-1v1h-1v1h-1v-1h-1v-1h-1v-1h-1z" fill="#808080"/></svg>
<svg style="position:absolute;left:714px;top:69px" width="16" height="16" viewBox="0 0 16 16"><path d="M0.5 3.5l2-2h5l1 2h7v11h-15z" fill="#f8f040" stroke="#909000"/><path d="M0.5 5.5h15" stroke="#d0c800"/><ellipse cx="9" cy="10" rx="3" ry="2" fill="#1a70d8"/></svg>
<span class="t" style="left:733px;top:71px;font-size:11px;color:#808080;">root_cluster</span>
<svg style="position:absolute;left:840px;top:79px" width="5" height="3" viewBox="0 0 5 3" shape-rendering="crispEdges"><path d="M0 0h5v1h-1v1h-1v1h-1v-1h-1v-1h-1z" fill="#000"/></svg>
<div style="left:4px;top:89px;width:643px;height:1px;background:#808080"></div>
<div style="left:4px;top:89px;width:1px;height:23px;background:#808080"></div>
<div style="left:4px;top:111px;width:643px;height:1px;background:#808080"></div>
<div style="left:646px;top:89px;width:1px;height:23px;background:#808080"></div>
<div style="left:6px;top:90px;width:98px;height:1px;background:#ffffff"></div>
<div style="left:5px;top:91px;width:1px;height:20px;background:#ffffff"></div>
<div style="left:104px;top:91px;width:1px;height:20px;background:#404040"></div>
<div style="left:103px;top:90px;width:1px;height:1px;background:#404040"></div>
<svg style="position:absolute;left:9px;top:96px" width="14" height="11" viewBox="0 0 14 11"><ellipse cx="7" cy="5.5" rx="6.3" ry="4.8" fill="#1a90e0" stroke="#0a50a0" stroke-width="1"/><ellipse cx="5.5" cy="4" rx="3" ry="1.5" fill="#60c0ff" opacity=".7"/></svg>
<span class="t" style="left:29px;top:96px;font-size:11px;font-weight:bold;color:#000;transform:scaleX(0.9417);transform-origin:0 0;">TESTROOT</span>
<svg style="position:absolute;left:91px;top:97px" width="11" height="11" viewBox="0 0 11 11"><path d="M0.50 2.70L2.70 0.50L5.50 3.30L8.30 0.50L10.50 2.70L7.70 5.50L10.50 8.30L8.30 10.50L5.50 7.70L2.70 10.50L0.50 8.30L3.30 5.50z" fill="#fff" stroke="#1a4ec8" stroke-width="1.1" stroke-linejoin="round"/></svg>
<svg style="position:absolute;left:615px;top:98px" width="8" height="4" viewBox="0 0 8 4"><defs><linearGradient id="mwg" x1="0" y1="0" x2="1" y2="1"><stop offset="0" stop-color="#7aa8ff"/><stop offset="1" stop-color="#1a48c8"/></linearGradient></defs><rect x="0" y="0" width="8" height="4" rx="1" fill="url(#mwg)"/><rect x="1.5" y="1.5" width="5" height="1.2" fill="#fff"/></svg>
<svg style="position:absolute;left:632px;top:94px" width="16" height="16" viewBox="0 0 16 16"><defs><linearGradient id="g9" x1="0" y1="0" x2="0" y2="1"><stop offset="0" stop-color="#fff"/><stop offset="1" stop-color="#e4e4ff"/></linearGradient></defs><rect x="0.5" y="0.5" width="10" height="10" fill="url(#g9)" stroke="#1a50d8"/><rect x="1" y="1" width="9" height="2" fill="#4a80f0"/></svg>
<div style="left:4px;top:116px;width:643px;height:1px;background:#808080"></div>
<div style="left:4px;top:116px;width:1px;height:341px;background:#808080"></div>
<div style="left:4px;top:456px;width:643px;height:1px;background:#808080"></div>
<div style="left:646px;top:116px;width:1px;height:341px;background:#808080"></div>
<span class="t" style="left:8px;top:122px;font-size:11px;color:#000;">Feature</span>
<span class="t" style="left:397px;top:120px;font-size:11px;color:#800000;">root_cluster</span>
<span class="t" style="left:466px;top:120px;font-size:11px;color:#0000ff;transform:scaleX(0.8583);transform-origin:0 0;">TESTROOT</span>
<span class="t" style="left:526px;top:120px;font-size:11px;color:#008000;">make</span>
<svg style="position:absolute;left:560px;top:121px" width="12" height="11" viewBox="0 0 12 11"><path d="M11 .5v10L.5 5.5z" fill="#c8c8c8" stroke="#a8a8a8"/></svg>
<svg style="position:absolute;left:579px;top:121px" width="12" height="11" viewBox="0 0 12 11"><path d="M.5 .5v10L11 5.5z" fill="#c8c8c8" stroke="#a8a8a8"/></svg>
<svg style="position:absolute;left:597px;top:119px" width="8" height="11" viewBox="0 0 8 11"><path d="M1.5 0.5h5l-.8 1.5v3.5l1.5 1.5h-6.5l1.5-1.5v-3.5z" fill="#e01030" stroke="#900018" stroke-width=".6"/><rect x="3.5" y="7" width="1" height="4" fill="#900018"/></svg>
<svg style="position:absolute;left:613px;top:119px" width="16" height="16" viewBox="0 0 16 16"><defs><linearGradient id="g10" x1="0" y1="0" x2="0" y2="1"><stop offset="0" stop-color="#fff"/><stop offset="1" stop-color="#e4e4ff"/></linearGradient></defs><rect x="0.5" y="0.5" width="10" height="10" fill="url(#g10)" stroke="#1a50d8"/><rect x="1" y="1" width="9" height="2" fill="#4a80f0"/></svg>
<svg style="position:absolute;left:631px;top:119px" width="16" height="16" viewBox="0 0 16 16"><path d="M0.50 2.70L2.70 0.50L5.50 3.30L8.30 0.50L10.50 2.70L7.70 5.50L10.50 8.30L8.30 10.50L5.50 7.70L2.70 10.50L0.50 8.30L3.30 5.50z" fill="#fff" stroke="#1a4ec8" stroke-width="1.1" stroke-linejoin="round"/></svg>
<div style="left:5px;top:135px;width:641px;height:1px;background:#808080"></div>
<svg style="position:absolute;left:9px;top:138px" width="16" height="16" viewBox="0 0 16 16"><rect x="1.5" y="5.5" width="11" height="10" fill="#f0f0ff" stroke="#2a62e0"/><rect x="3" y="13" width="8" height="1" fill="#707070"/><path d="M4.5 12.5l8-9 3 2.5-8 9z" fill="#30c830" stroke="#107010" stroke-width=".7"/><path d="M12.5 3.5l1.5-1.5 2.5 2-1 2z" fill="#f04818"/><path d="M4.5 12.5l3 2.5-3.5.8z" fill="#d8c030"/></svg>
<div style="left:29px;top:136px;width:24px;height:23px;background-color:#fff;background-image:linear-gradient(45deg,#d4d0c8 25%,transparent 25%,transparent 75%,#d4d0c8 75%),linear-gradient(45deg,#d4d0c8 25%,transparent 25%,transparent 75%,#d4d0c8 75%);background-size:2px 2px;background-position:0 0,1px 1px"></div>
<div style="left:29px;top:136px;width:24px;height:1px;background:#808080"></div>
<div style="left:29px;top:136px;width:1px;height:23px;background:#808080"></div>
<div style="left:29px;top:158px;width:24px;height:1px;background:#ffffff"></div>
<div style="left:52px;top:136px;width:1px;height:23px;background:#ffffff"></div>
<svg style="position:absolute;left:33px;top:139px" width="16" height="16" viewBox="0 0 16 16"><rect x=".5" y="5.5" width="11" height="10" fill="#f0f0ff" stroke="#2a62e0"/><rect x="2" y="13" width="8" height="1" fill="#707070"/><rect x="2" y="10" width="4" height="1" fill="#b0b0b0"/><path d="M6 12l3-4" stroke="#303030" stroke-dasharray="1 1"/><path d="M10.333333333333334 0.5h3.3333333333333335v2.8333333333333335h2.8333333333333335v3.3333333333333335h-2.8333333333333335v2.8333333333333335h-3.3333333333333335v-2.8333333333333335h-2.8333333333333335v-3.3333333333333335h2.8333333333333335z" fill="#38a838" stroke="#0a600a" stroke-width="1" stroke-linejoin="round"/></svg>
<div style="left:56px;top:138px;width:1px;height:19px;background:#808080"></div>
<div style="left:57px;top:138px;width:1px;height:19px;background:#ffffff"></div>
<svg style="position:absolute;left:64px;top:139px" width="16" height="16" viewBox="0 0 16 16"><path d="M1 2.5L4 5.5M1 14.5L4 11.5" stroke="#3a70ff" stroke-width="1.5"/><path d="M6.5 8V3.5L2 8z" fill="#1438e8"/><path d="M6.5 9V13.5L2 9z" fill="#1438e8"/><path d="M9.333333333333334 4.5h3.3333333333333335v2.8333333333333335h2.8333333333333335v3.3333333333333335h-2.8333333333333335v2.8333333333333335h-3.3333333333333335v-2.8333333333333335h-2.8333333333333335v-3.3333333333333335h2.8333333333333335z" fill="#38a838" stroke="#0a600a" stroke-width="1" stroke-linejoin="round"/></svg>
<svg style="position:absolute;left:88px;top:139px" width="16" height="16" viewBox="0 0 16 16"><path d="M1 2.5L4 5.5M1 14.5L4 11.5" stroke="#3a70ff" stroke-width="1.5"/><path d="M6.5 8V3.5L2 8z" fill="#1438e8"/><path d="M6.5 9V13.5L2 9z" fill="#1438e8"/><rect x="7.5" y="5.5" width="7" height="3" rx="1" fill="#30b030" stroke="#0a600a"/><rect x="7.5" y="10.5" width="7" height="3" rx="1" fill="#30b030" stroke="#0a600a"/></svg>
<svg style="position:absolute;left:111px;top:139px" width="16" height="16" viewBox="0 0 16 16"><path d="M1 2.5L4 5.5M1 14.5L4 11.5" stroke="#3a70ff" stroke-width="1.5"/><path d="M6.5 8V3.5L2 8z" fill="#1438e8"/><path d="M6.5 9V13.5L2 9z" fill="#1438e8"/><path d="M9.333333333333334 5.5h3.3333333333333335v2.8333333333333335h2.8333333333333335v3.3333333333333335h-2.8333333333333335v2.8333333333333335h-3.3333333333333335v-2.8333333333333335h-2.8333333333333335v-3.3333333333333335h2.8333333333333335z" fill="#38a838" stroke="#0a600a" stroke-width="1" stroke-linejoin="round"/><path d="M11.5 0.20000000000000018Q12.3 3.2 15.3 4Q12.3 4.8 11.5 7.8Q10.7 4.8 7.7 4Q10.7 3.2 11.5 0.20000000000000018z" fill="#ffff30" stroke="#303000" stroke-width=".8"/></svg>
<div style="left:134px;top:138px;width:1px;height:19px;background:#808080"></div>
<div style="left:135px;top:138px;width:1px;height:19px;background:#ffffff"></div>
<svg style="position:absolute;left:142px;top:139px" width="16" height="16" viewBox="0 0 16 16"><path d="M3.3333333333333335 4.5h3.3333333333333335v2.8333333333333335h2.8333333333333335v3.3333333333333335h-2.8333333333333335v2.8333333333333335h-3.3333333333333335v-2.8333333333333335h-2.8333333333333335v-3.3333333333333335h2.8333333333333335z" fill="#38a838" stroke="#0a600a" stroke-width="1" stroke-linejoin="round"/><path d="M10 7.5L13 4.5M10 9.5L13 12.5" stroke="#3a70ff" stroke-width="1.5"/><path d="M15.5 2V6.5L11 2z" fill="#1438e8"/><path d="M15.5 15V10.5L11 15z" fill="#1438e8"/></svg>
<svg style="position:absolute;left:166px;top:139px" width="16" height="16" viewBox="0 0 16 16"><rect x="0.5" y="5.5" width="7" height="3" rx="1" fill="#30b030" stroke="#0a600a"/><rect x="0.5" y="10.5" width="7" height="3" rx="1" fill="#30b030" stroke="#0a600a"/><path d="M10 7.5L13 4.5M10 9.5L13 12.5" stroke="#3a70ff" stroke-width="1.5"/><path d="M15.5 2V6.5L11 2z" fill="#1438e8"/><path d="M15.5 15V10.5L11 15z" fill="#1438e8"/></svg>
<svg style="position:absolute;left:190px;top:139px" width="16" height="16" viewBox="0 0 16 16"><path d="M3.3333333333333335 5.5h3.3333333333333335v2.8333333333333335h2.8333333333333335v3.3333333333333335h-2.8333333333333335v2.8333333333333335h-3.3333333333333335v-2.8333333333333335h-2.8333333333333335v-3.3333333333333335h2.8333333333333335z" fill="#38a838" stroke="#0a600a" stroke-width="1" stroke-linejoin="round"/><path d="M5.5 0.20000000000000018Q6.3 3.2 9.3 4Q6.3 4.8 5.5 7.8Q4.7 4.8 1.7000000000000002 4Q4.7 3.2 5.5 0.20000000000000018z" fill="#ffff30" stroke="#303000" stroke-width=".8"/><path d="M10 7.5L13 4.5M10 9.5L13 12.5" stroke="#3a70ff" stroke-width="1.5"/><path d="M15.5 2V6.5L11 2z" fill="#1438e8"/><path d="M15.5 15V10.5L11 15z" fill="#1438e8"/></svg>
<div style="left:212px;top:138px;width:1px;height:19px;background:#808080"></div>
<div style="left:213px;top:138px;width:1px;height:19px;background:#ffffff"></div>
<svg style="position:absolute;left:219px;top:139px" width="16" height="16" viewBox="0 0 16 16"><path d="M6.333333333333334 0.5h2.3333333333333335v1.8333333333333335h1.8333333333333335v2.3333333333333335h-1.8333333333333335v1.8333333333333335h-2.3333333333333335v-1.8333333333333335h-1.8333333333333335v-2.3333333333333335h1.8333333333333335z" fill="#c03030" stroke="#701010" stroke-width="1" stroke-linejoin="round"/><path d="M1.5 9.5q6-4 13 0" fill="none" stroke="#d01010" stroke-width="1.2"/><path d="M2.3333333333333335 8.5h2.3333333333333335v1.8333333333333335h1.8333333333333335v2.3333333333333335h-1.8333333333333335v1.8333333333333335h-2.3333333333333335v-1.8333333333333335h-1.8333333333333335v-2.3333333333333335h1.8333333333333335z" fill="#38b038" stroke="#0a600a" stroke-width="1" stroke-linejoin="round"/><path d="M10.333333333333334 8.5h2.3333333333333335v1.8333333333333335h1.8333333333333335v2.3333333333333335h-1.8333333333333335v1.8333333333333335h-2.3333333333333335v-1.8333333333333335h-1.8333333333333335v-2.3333333333333335h1.8333333333333335z" fill="#38b038" stroke="#0a600a" stroke-width="1" stroke-linejoin="round"/></svg>
<svg style="position:absolute;left:243px;top:139px" width="16" height="16" viewBox="0 0 16 16"><path d="M2.3333333333333335 0.5h2.3333333333333335v1.8333333333333335h1.8333333333333335v2.3333333333333335h-1.8333333333333335v1.8333333333333335h-2.3333333333333335v-1.8333333333333335h-1.8333333333333335v-2.3333333333333335h1.8333333333333335z" fill="#38b038" stroke="#0a600a" stroke-width="1" stroke-linejoin="round"/><path d="M10.333333333333334 0.5h2.3333333333333335v1.8333333333333335h1.8333333333333335v2.3333333333333335h-1.8333333333333335v1.8333333333333335h-2.3333333333333335v-1.8333333333333335h-1.8333333333333335v-2.3333333333333335h1.8333333333333335z" fill="#38b038" stroke="#0a600a" stroke-width="1" stroke-linejoin="round"/><path d="M5 8l2 2M11 8l-2 2" stroke="#ff2020" stroke-width="1.4"/><path d="M6.333333333333334 8.5h2.3333333333333335v1.8333333333333335h1.8333333333333335v2.3333333333333335h-1.8333333333333335v1.8333333333333335h-2.3333333333333335v-1.8333333333333335h-1.8333333333333335v-2.3333333333333335h1.8333333333333335z" fill="#c03030" stroke="#701010" stroke-width="1" stroke-linejoin="round"/></svg>
<svg style="position:absolute;left:267px;top:139px" width="16" height="16" viewBox="0 0 16 16"><path d="M6.333333333333334 0.5h2.3333333333333335v1.8333333333333335h1.8333333333333335v2.3333333333333335h-1.8333333333333335v1.8333333333333335h-2.3333333333333335v-1.8333333333333335h-1.8333333333333335v-2.3333333333333335h1.8333333333333335z" fill="#c03030" stroke="#701010" stroke-width="1" stroke-linejoin="round"/><path d="M6 7v3M10 7v3" stroke="#ff2020" stroke-width="1.2"/><path d="M2.3333333333333335 8.5h2.3333333333333335v1.8333333333333335h1.8333333333333335v2.3333333333333335h-1.8333333333333335v1.8333333333333335h-2.3333333333333335v-1.8333333333333335h-1.8333333333333335v-2.3333333333333335h1.8333333333333335z" fill="#38b038" stroke="#0a600a" stroke-width="1" stroke-linejoin="round"/><path d="M10.333333333333334 8.5h2.3333333333333335v1.8333333333333335h1.8333333333333335v2.3333333333333335h-1.8333333333333335v1.8333333333333335h-2.3333333333333335v-1.8333333333333335h-1.8333333333333335v-2.3333333333333335h1.8333333333333335z" fill="#38b038" stroke="#0a600a" stroke-width="1" stroke-linejoin="round"/></svg>
<div style="left:290px;top:138px;width:1px;height:19px;background:#808080"></div>
<div style="left:291px;top:138px;width:1px;height:19px;background:#ffffff"></div>
<svg style="position:absolute;left:297px;top:139px" width="16" height="16" viewBox="0 0 16 16"><path d="M3.3333333333333335 1.5h2.3333333333333335v1.8333333333333335h1.8333333333333335v2.3333333333333335h-1.8333333333333335v1.8333333333333335h-2.3333333333333335v-1.8333333333333335h-1.8333333333333335v-2.3333333333333335h1.8333333333333335z" fill="#38b038" stroke="#0a600a" stroke-width="1" stroke-linejoin="round"/><path d="M10.333333333333334 0.5h2.3333333333333335v1.8333333333333335h1.8333333333333335v2.3333333333333335h-1.8333333333333335v1.8333333333333335h-2.3333333333333335v-1.8333333333333335h-1.8333333333333335v-2.3333333333333335h1.8333333333333335z" fill="#c03030" stroke="#701010" stroke-width="1" stroke-linejoin="round"/><path d="M2.3333333333333335 8.5h2.3333333333333335v1.8333333333333335h1.8333333333333335v2.3333333333333335h-1.8333333333333335v1.8333333333333335h-2.3333333333333335v-1.8333333333333335h-1.8333333333333335v-2.3333333333333335h1.8333333333333335z" fill="#c03030" stroke="#701010" stroke-width="1" stroke-linejoin="round"/><path d="M9.333333333333334 7.5h2.3333333333333335v1.8333333333333335h1.8333333333333335v2.3333333333333335h-1.8333333333333335v1.8333333333333335h-2.3333333333333335v-1.8333333333333335h-1.8333333333333335v-2.3333333333333335h1.8333333333333335z" fill="#38b038" stroke="#0a600a" stroke-width="1" stroke-linejoin="round"/></svg>
<svg style="position:absolute;left:626px;top:139px" width="16" height="16" viewBox="0 0 16 16"><rect x="1.5" y="5.5" width="11" height="10" fill="#f0f0ff" stroke="#2a62e0"/><rect x="3" y="13" width="8" height="1" fill="#707070"/><path d="M4.5 12.5l8-9 3 2.5-8 9z" fill="#30c830" stroke="#107010" stroke-width=".7"/><path d="M12.5 3.5l1.5-1.5 2.5 2-1 2z" fill="#f04818"/><path d="M4.5 12.5l3 2.5-3.5.8z" fill="#d8c030"/></svg>
<div style="left:5px;top:159px;width:641px;height:1px;background:#808080"></div>
<div style="left:5px;top:160px;width:641px;height:1px;background:#ffffff"></div>
<span class="t" style="left:5px;top:162px;font-size:11px;color:#000;transform:scaleX(0.9741);transform-origin:0 0;">Flat view of feature `make' of class TESTROOT</span>
<div style="left:5px;top:176px;width:624px;height:257px;background:#fff"></div>
<div style="left:4px;top:175px;width:642px;height:1px;background:#808080"></div>
<div style="left:5px;top:176px;width:15px;height:257px;background:#d4d0c8"></div>
<div style="left:4px;top:176px;width:1px;height:257px;background:#808080"></div>
<div style="left:20px;top:176px;width:1px;height:257px;background:#e8e8e8"></div>
<div style="left:629px;top:176px;width:16px;height:257px;background-color:#fff;background-image:linear-gradient(45deg,#d4d0c8 25%,transparent 25%,transparent 75%,#d4d0c8 75%),linear-gradient(45deg,#d4d0c8 25%,transparent 25%,transparent 75%,#d4d0c8 75%);background-size:2px 2px;background-position:0 0,1px 1px"></div>
<div style="left:629px;top:176px;width:16px;height:16px;background:#d4d0c8"></div>
<div style="left:629px;top:176px;width:16px;height:1px;background:#d4d0c8"></div>
<div style="left:629px;top:176px;width:1px;height:16px;background:#d4d0c8"></div>
<div style="left:629px;top:191px;width:16px;height:1px;background:#404040"></div>
<div style="left:644px;top:176px;width:1px;height:16px;background:#404040"></div>
<div style="left:630px;top:177px;width:14px;height:1px;background:#ffffff"></div>
<div style="left:630px;top:177px;width:1px;height:14px;background:#ffffff"></div>
<div style="left:630px;top:190px;width:14px;height:1px;background:#808080"></div>
<div style="left:643px;top:177px;width:1px;height:14px;background:#808080"></div>
<svg style="position:absolute;left:633px;top:182px" width="7" height="4" viewBox="0 0 7 4" shape-rendering="crispEdges"><path d="M3 0h1v1h1v1h1v1h1v1h-7v-1h1v-1h1v-1h1z" fill="#000"/></svg>
<div style="left:629px;top:417px;width:16px;height:16px;background:#d4d0c8"></div>
<div style="left:629px;top:417px;width:16px;height:1px;background:#d4d0c8"></div>
<div style="left:629px;top:417px;width:1px;height:16px;background:#d4d0c8"></div>
<div style="left:629px;top:432px;width:16px;height:1px;background:#404040"></div>
<div style="left:644px;top:417px;width:1px;height:16px;background:#404040"></div>
<div style="left:630px;top:418px;width:14px;height:1px;background:#ffffff"></div>
<div style="left:630px;top:418px;width:1px;height:14px;background:#ffffff"></div>
<div style="left:630px;top:431px;width:14px;height:1px;background:#808080"></div>
<div style="left:643px;top:418px;width:1px;height:14px;background:#808080"></div>
<svg style="position:absolute;left:633px;top:423px" width="7" height="4" viewBox="0 0 7 4" shape-rendering="crispEdges"><path d="M0 0h7v1h-1v1h-1v1h-1v1h-1v-1h-1v-1h-1v-1h-1z" fill="#000"/></svg>
<div style="left:629px;top:192px;width:16px;height:201px;background:#d4d0c8"></div>
<div style="left:629px;top:192px;width:16px;height:1px;background:#d4d0c8"></div>
<div style="left:629px;top:192px;width:1px;height:201px;background:#d4d0c8"></div>
<div style="left:629px;top:392px;width:16px;height:1px;background:#404040"></div>
<div style="left:644px;top:192px;width:1px;height:201px;background:#404040"></div>
<div style="left:630px;top:193px;width:14px;height:1px;background:#ffffff"></div>
<div style="left:630px;top:193px;width:1px;height:199px;background:#ffffff"></div>
<div style="left:630px;top:391px;width:14px;height:1px;background:#808080"></div>
<div style="left:643px;top:193px;width:1px;height:199px;background:#808080"></div>
<div style="left:29px;top:177px;width:2px;height:14px;background:#808080"></div>
<svg style="position:absolute;left:7px;top:236px" width="13" height="13" viewBox="0 0 13 13"><circle cx="6.5" cy="6.5" r="6" fill="#c01818"/><path d="M3.5 2.5v8l7-4z" fill="#30d030" stroke="#108010" stroke-width=".7"/></svg>
<svg style="position:absolute;left:7px;top:251px" width="13" height="13" viewBox="0 0 13 13"><circle cx="6.5" cy="6.5" r="5.7" fill="none" stroke="#606060" stroke-width="1"/></svg>
<svg style="position:absolute;left:7px;top:266px" width="13" height="13" viewBox="0 0 13 13"><defs><radialGradient id="g11" cx="35%" cy="30%" r="70%"><stop offset="0" stop-color="#e8e8e8"/><stop offset="0.6" stop-color="#909090"/><stop offset="1" stop-color="#606060"/></radialGradient></defs><circle cx="6.5" cy="6.5" r="6.2" fill="url(#g11)"/></svg>
<svg style="position:absolute;left:7px;top:281px" width="13" height="13" viewBox="0 0 13 13"><defs><radialGradient id="g12" cx="35%" cy="30%" r="70%"><stop offset="0" stop-color="#ff9090"/><stop offset="0.6" stop-color="#d41818"/><stop offset="1" stop-color="#980000"/></radialGradient></defs><circle cx="6.5" cy="6.5" r="6.2" fill="url(#g12)"/></svg>
<svg style="position:absolute;left:7px;top:296px" width="13" height="13" viewBox="0 0 13 13"><circle cx="6.5" cy="6.5" r="5.7" fill="none" stroke="#606060" stroke-width="1"/></svg>
<svg style="position:absolute;left:7px;top:311px" width="13" height="13" viewBox="0 0 13 13"><defs><radialGradient id="g13" cx="35%" cy="30%" r="70%"><stop offset="0" stop-color="#ff9090"/><stop offset="0.6" stop-color="#d41818"/><stop offset="1" stop-color="#980000"/></radialGradient></defs><circle cx="6.5" cy="6.5" r="6.2" fill="url(#g13)"/></svg>
<span class="t" style="left:57px;top:195px;font-family:'Liberation Mono';font-size:11.67px"><span style="color:#008000">make</span></span>
<span class="t" style="left:113px;top:210px;font-family:'Liberation Mono';font-size:11.67px"><span style="color:#800000">-- Output messages tracing what's going on.</span></span>
<span class="t" style="left:85px;top:225px;font-family:'Liberation Mono';font-size:11.67px"><b style="color:#000080">do</b></span>
<span class="t" style="left:113px;top:240px;font-family:'Liberation Mono';font-size:11.67px"><span style="color:#008000">display_demonstration_message</span></span>
<span class="t" style="left:113px;top:255px;font-family:'Liberation Mono';font-size:11.67px"><b style="color:#000080">create</b> <span style="color:#ff0000">{</span><span style="color:#0000ff">HEIR</span><span style="color:#ff0000">}</span> <span style="color:#008000">o1</span></span>
<span class="t" style="left:113px;top:270px;font-family:'Liberation Mono';font-size:11.67px"><b style="color:#000080">create</b> <span style="color:#008000">o2</span></span>
<span class="t" style="left:113px;top:285px;font-family:'Liberation Mono';font-size:11.67px"><span style="color:#008000">o1</span><span style="color:#ff0000">.</span><span style="color:#008000">display</span></span>
<span class="t" style="left:113px;top:300px;font-family:'Liberation Mono';font-size:11.67px"><span style="color:#008000">o2</span><span style="color:#ff0000">.</span><span style="color:#008000">display</span></span>
<span class="t" style="left:85px;top:315px;font-family:'Liberation Mono';font-size:11.67px"><b style="color:#000080">end</b></span>
<div style="left:5px;top:433px;width:641px;height:1px;background:#808080"></div>
<div style="left:5px;top:435px;width:1px;height:20px;background:#ffffff"></div>
<div style="left:76px;top:434px;width:1px;height:22px;background:#404040"></div>
<div style="left:6px;top:455px;width:70px;height:1px;background:#404040"></div>
<div style="left:133px;top:435px;width:1px;height:17px;background:#404040"></div>
<div style="left:77px;top:453px;width:56px;height:1px;background:#404040"></div>
<svg style="position:absolute;left:9px;top:439px" width="16" height="16" viewBox="0 0 16 16"><path d="M3 5h3v3h3v3h-3v3h-3v-3h-3v-3h3z" fill="#30a030" stroke="#106010" stroke-width=".8"/><rect x="11" y="1" width="5" height="1" fill="#333"/><rect x="11" y="3" width="5" height="1" fill="#333"/><rect x="11" y="5" width="5" height="1" fill="#333"/></svg>
<span class="t" style="left:29px;top:440px;font-size:11px;font-weight:bold;color:#000;transform:scaleX(1.0750);transform-origin:0 0;">Feature</span>
<svg style="position:absolute;left:82px;top:439px" width="14" height="11" viewBox="0 0 14 11"><ellipse cx="7" cy="5.5" rx="6.3" ry="4.8" fill="#1a90e0" stroke="#0a50a0" stroke-width="1"/><ellipse cx="5.5" cy="4" rx="3" ry="1.5" fill="#60c0ff" opacity=".7"/></svg>
<span class="t" style="left:101px;top:439px;font-size:11px;color:#000;transform:scaleX(0.8571);transform-origin:0 0;">Class</span>
<div style="left:4px;top:461px;width:400px;height:1px;background:#808080"></div>
<div style="left:4px;top:461px;width:1px;height:158px;background:#808080"></div>
<div style="left:4px;top:618px;width:400px;height:1px;background:#808080"></div>
<div style="left:403px;top:461px;width:1px;height:158px;background:#808080"></div>
<span class="t" style="left:8px;top:467px;font-size:11px;color:#000;">Objects</span>
<span class="t" style="left:113px;top:464px;font-size:11px;color:#0000ff;transform:scaleX(0.9118);transform-origin:0 0;">{TESTROOT}</span>
<span class="t" style="left:175px;top:464px;font-size:11px;color:#008000;">.make</span>
<svg style="position:absolute;left:229px;top:472px" width="7" height="4" viewBox="0 0 7 4" shape-rendering="crispEdges"><path d="M0 0h7v1h-1v1h-1v1h-1v1h-1v-1h-1v-1h-1v-1h-1z" fill="#000"/></svg>
<svg style="position:absolute;left:246px;top:466px" width="11" height="11" viewBox="0 0 11 11"><path d="M1 1l9 9M10 1l-9 9" stroke="#a0a0a0" stroke-width="1.3"/></svg>
<svg style="position:absolute;left:263px;top:466px" width="12" height="12" viewBox="0 0 12 12"><path d="M2 2l8 8" stroke="#20a020" stroke-width="2"/><path d="M1 1h5l-5 5z M11 11h-5l5-5z" fill="#20a020"/></svg>
<svg style="position:absolute;left:281px;top:466px" width="12" height="12" viewBox="0 0 12 12"><path d="M0.5 0.5h11v8h-6l-2 3v-3h-3z" fill="#f8f060" stroke="#a09000"/></svg>
<span class="t" style="left:299px;top:468px;font-size:10px;color:#606060;">0x</span>
<svg style="position:absolute;left:317px;top:466px" width="11" height="12" viewBox="0 0 11 12"><ellipse cx="5.5" cy="2.5" rx="5" ry="2" fill="#e0e0e0" stroke="#333"/><path d="M0.5 2.5v7c0 1 2 2 5 2s5-1 5-2v-7" fill="#c8c8c8" stroke="#333"/><path d="M0.5 5c0 1 2 2 5 2s5-1 5-2M0.5 7.5c0 1 2 2 5 2s5-1 5-2" fill="none" stroke="#333"/></svg>
<svg style="position:absolute;left:335px;top:466px" width="12" height="11" viewBox="0 0 12 11"><rect x="0.5" y="0.5" width="11" height="10" fill="#fff" stroke="#2a62d8"/><rect x="1" y="1" width="10" height="2" fill="#4a80f0"/><path d="M2 6.5h6" stroke="#000"/><path d="M6 4.5l2.5 2-2.5 2z" fill="#000"/><rect x="9" y="4" width="1" height="5" fill="#000"/></svg>
<svg style="position:absolute;left:356px;top:466px" width="8" height="11" viewBox="0 0 8 11"><path d="M1.5 0.5h5l-.8 1.5v3.5l1.5 1.5h-6.5l1.5-1.5v-3.5z" fill="#e01030" stroke="#900018" stroke-width=".6"/><rect x="3.5" y="7" width="1" height="4" fill="#900018"/></svg>
<svg style="position:absolute;left:372px;top:466px" width="16" height="16" viewBox="0 0 16 16"><defs><linearGradient id="g14" x1="0" y1="0" x2="0" y2="1"><stop offset="0" stop-color="#fff"/><stop offset="1" stop-color="#e4e4ff"/></linearGradient></defs><rect x="0.5" y="0.5" width="10" height="10" fill="url(#g14)" stroke="#1a50d8"/><rect x="1" y="1" width="9" height="2" fill="#4a80f0"/></svg>
<svg style="position:absolute;left:390px;top:466px" width="16" height="16" viewBox="0 0 16 16"><path d="M0.50 2.70L2.70 0.50L5.50 3.30L8.30 0.50L10.50 2.70L7.70 5.50L10.50 8.30L8.30 10.50L5.50 7.70L2.70 10.50L0.50 8.30L3.30 5.50z" fill="#fff" stroke="#1a4ec8" stroke-width="1.1" stroke-linejoin="round"/></svg>
<div style="left:6px;top:480px;width:397px;height:122px;background:#fff"></div>
<div style="left:5px;top:480px;width:1px;height:138px;background:#808080"></div>
<div style="left:5px;top:480px;width:398px;height:1px;background:#808080"></div>
<div style="left:6px;top:481px;width:397px;height:19px;background:#d4d0c8"></div>
<div style="left:6px;top:481px;width:397px;height:1px;background:#000"></div>
<div style="left:6px;top:481px;width:1px;height:19px;background:#000"></div>
<div style="left:6px;top:499px;width:397px;height:1px;background:#000"></div>
<div style="left:7px;top:482px;width:396px;height:1px;background:#ffffff"></div>
<div style="left:7px;top:482px;width:1px;height:17px;background:#ffffff"></div>
<div style="left:7px;top:498px;width:396px;height:1px;background:#808080"></div>
<div style="left:155px;top:482px;width:1px;height:17px;background:#808080"></div>
<div style="left:156px;top:482px;width:1px;height:18px;background:#000"></div>
<div style="left:157px;top:482px;width:1px;height:17px;background:#ffffff"></div>
<div style="left:305px;top:482px;width:1px;height:17px;background:#808080"></div>
<div style="left:306px;top:482px;width:1px;height:18px;background:#000"></div>
<div style="left:307px;top:482px;width:1px;height:17px;background:#ffffff"></div>
<span class="t" style="left:13px;top:485px;font-size:11px;color:#000;">Name</span>
<span class="t" style="left:163px;top:485px;font-size:11px;color:#000;">Value</span>
<span class="t" style="left:312px;top:485px;font-size:11px;color:#000;">Type</span>
<div style="left:7px;top:517px;width:396px;height:1px;background:#d4d0c8"></div>
<div style="left:7px;top:534px;width:396px;height:1px;background:#d4d0c8"></div>
<div style="left:7px;top:551px;width:396px;height:1px;background:#d4d0c8"></div>
<div style="left:7px;top:568px;width:396px;height:1px;background:#d4d0c8"></div>
<div style="left:156px;top:501px;width:1px;height:67px;background:#d4d0c8"></div>
<div style="left:306px;top:501px;width:1px;height:67px;background:#d4d0c8"></div>
<div style="left:12px;top:504px;width:9px;height:1px;background:#808080"></div>
<div style="left:12px;top:504px;width:1px;height:9px;background:#808080"></div>
<div style="left:12px;top:512px;width:9px;height:1px;background:#808080"></div>
<div style="left:20px;top:504px;width:1px;height:9px;background:#808080"></div>
<div style="left:14px;top:508px;width:5px;height:1px;background:#000"></div>
<svg style="position:absolute;left:30px;top:502px" width="14" height="14" viewBox="0 0 14 14"><rect x="2" y="0" width="1" height="14" fill="#b02010"/><rect x="0" y="2" width="14" height="1" fill="#b02010"/><rect x="5" y="0" width="1" height="14" fill="#b02010"/><rect x="0" y="5" width="14" height="1" fill="#b02010"/><rect x="8" y="0" width="1" height="14" fill="#b02010"/><rect x="0" y="8" width="14" height="1" fill="#b02010"/><rect x="11" y="0" width="1" height="14" fill="#b02010"/><rect x="0" y="11" width="14" height="1" fill="#b02010"/></svg>
<span class="t" style="left:47px;top:503px;font-size:11px;color:#000;">Current object</span>
<span class="t" style="left:159px;top:503px;font-size:11px;color:#000;transform:scaleX(0.9429);transform-origin:0 0;">&lt;0x276A3A4&gt;</span>
<span class="t" style="left:309px;top:503px;font-size:11px;color:#000;transform:scaleX(0.9500);transform-origin:0 0;">TESTROOT</span>
<div style="left:31px;top:518px;width:1px;height:42px;background:#000"></div>
<div style="left:32px;top:525px;width:12px;height:1px;background:#000"></div>
<div style="left:32px;top:542px;width:12px;height:1px;background:#000"></div>
<svg style="position:absolute;left:45px;top:519px" width="14" height="14" viewBox="0 0 14 14"><rect x="2" y="0" width="1" height="14" fill="#b0b0b0"/><rect x="0" y="2" width="14" height="1" fill="#b0b0b0"/><rect x="5" y="0" width="1" height="14" fill="#b0b0b0"/><rect x="0" y="5" width="14" height="1" fill="#b0b0b0"/><rect x="8" y="0" width="1" height="14" fill="#b0b0b0"/><rect x="0" y="8" width="14" height="1" fill="#b0b0b0"/><rect x="11" y="0" width="1" height="14" fill="#b0b0b0"/><rect x="0" y="11" width="14" height="1" fill="#b0b0b0"/></svg>
<svg style="position:absolute;left:45px;top:536px" width="14" height="14" viewBox="0 0 14 14"><rect x="2" y="0" width="1" height="14" fill="#b0b0b0"/><rect x="0" y="2" width="14" height="1" fill="#b0b0b0"/><rect x="5" y="0" width="1" height="14" fill="#b0b0b0"/><rect x="0" y="5" width="14" height="1" fill="#b0b0b0"/><rect x="8" y="0" width="1" height="14" fill="#b0b0b0"/><rect x="0" y="8" width="14" height="1" fill="#b0b0b0"/><rect x="11" y="0" width="1" height="14" fill="#b0b0b0"/><rect x="0" y="11" width="14" height="1" fill="#b0b0b0"/></svg>
<span class="t" style="left:62px;top:520px;font-size:11px;color:#000;">o1</span>
<span class="t" style="left:159px;top:520px;font-size:11px;color:#000;">Void</span>
<span class="t" style="left:309px;top:520px;font-size:11px;color:#000;transform:scaleX(0.9062);transform-origin:0 0;">NONE</span>
<span class="t" style="left:62px;top:537px;font-size:11px;color:#000;">o2</span>
<span class="t" style="left:159px;top:537px;font-size:11px;color:#000;">Void</span>
<span class="t" style="left:309px;top:537px;font-size:11px;color:#000;transform:scaleX(0.9062);transform-origin:0 0;">NONE</span>
<div style="left:27px;top:555px;width:9px;height:9px;background:#fff"></div>
<div style="left:27px;top:555px;width:9px;height:1px;background:#808080"></div>
<div style="left:27px;top:555px;width:1px;height:9px;background:#808080"></div>
<div style="left:27px;top:563px;width:9px;height:1px;background:#808080"></div>
<div style="left:35px;top:555px;width:1px;height:9px;background:#808080"></div>
<div style="left:29px;top:559px;width:5px;height:1px;background:#000"></div>
<div style="left:31px;top:557px;width:1px;height:5px;background:#000"></div>
<div style="left:36px;top:559px;width:8px;height:1px;background:#000"></div>
<svg style="position:absolute;left:44px;top:552px" width="16" height="16" viewBox="0 0 16 16"><path d="M3 4h3v3h3v3h-3v3h-3v-3h-3v-3h3z" fill="#30a030" stroke="#106010" stroke-width=".8"/><path d="M9 0l2 1v5h2v2h-6v-2h2z" fill="#f0d020" stroke="#807000" stroke-width=".6"/></svg>
<span class="t" style="left:62px;top:554px;font-size:11px;color:#3333cc;">Once routines</span>
<div style="left:6px;top:602px;width:397px;height:16px;background-color:#fff;background-image:linear-gradient(45deg,#d4d0c8 25%,transparent 25%,transparent 75%,#d4d0c8 75%),linear-gradient(45deg,#d4d0c8 25%,transparent 25%,transparent 75%,#d4d0c8 75%);background-size:2px 2px;background-position:0 0,1px 1px"></div>
<div style="left:6px;top:602px;width:16px;height:16px;background:#d4d0c8"></div>
<div style="left:6px;top:602px;width:16px;height:1px;background:#d4d0c8"></div>
<div style="left:6px;top:602px;width:1px;height:16px;background:#d4d0c8"></div>
<div style="left:6px;top:617px;width:16px;height:1px;background:#404040"></div>
<div style="left:21px;top:602px;width:1px;height:16px;background:#404040"></div>
<div style="left:7px;top:603px;width:14px;height:1px;background:#ffffff"></div>
<div style="left:7px;top:603px;width:1px;height:14px;background:#ffffff"></div>
<div style="left:7px;top:616px;width:14px;height:1px;background:#808080"></div>
<div style="left:20px;top:603px;width:1px;height:14px;background:#808080"></div>
<svg style="position:absolute;left:12px;top:606px" width="4" height="7" viewBox="0 0 4 7" shape-rendering="crispEdges"><path d="M3 0h1v7h-1v-1h-1v-1h-1v-1h-1v-1h1v-1h1v-1h1z" fill="#000"/></svg>
<div style="left:387px;top:602px;width:16px;height:16px;background:#d4d0c8"></div>
<div style="left:387px;top:602px;width:16px;height:1px;background:#d4d0c8"></div>
<div style="left:387px;top:602px;width:1px;height:16px;background:#d4d0c8"></div>
<div style="left:387px;top:617px;width:16px;height:1px;background:#404040"></div>
<div style="left:402px;top:602px;width:1px;height:16px;background:#404040"></div>
<div style="left:388px;top:603px;width:14px;height:1px;background:#ffffff"></div>
<div style="left:388px;top:603px;width:1px;height:14px;background:#ffffff"></div>
<div style="left:388px;top:616px;width:14px;height:1px;background:#808080"></div>
<div style="left:401px;top:603px;width:1px;height:14px;background:#808080"></div>
<svg style="position:absolute;left:394px;top:606px" width="4" height="7" viewBox="0 0 4 7" shape-rendering="crispEdges"><path d="M0 0h1v1h1v1h1v1h1v1h-1v1h-1v1h-1v1h-1z" fill="#000"/></svg>
<div style="left:22px;top:602px;width:250px;height:16px;background:#d4d0c8"></div>
<div style="left:22px;top:602px;width:250px;height:1px;background:#d4d0c8"></div>
<div style="left:22px;top:602px;width:1px;height:16px;background:#d4d0c8"></div>
<div style="left:22px;top:617px;width:250px;height:1px;background:#404040"></div>
<div style="left:271px;top:602px;width:1px;height:16px;background:#404040"></div>
<div style="left:23px;top:603px;width:248px;height:1px;background:#ffffff"></div>
<div style="left:23px;top:603px;width:1px;height:14px;background:#ffffff"></div>
<div style="left:23px;top:616px;width:248px;height:1px;background:#808080"></div>
<div style="left:270px;top:603px;width:1px;height:14px;background:#808080"></div>
<div style="left:409px;top:461px;width:238px;height:1px;background:#808080"></div>
<div style="left:409px;top:461px;width:1px;height:158px;background:#808080"></div>
<div style="left:409px;top:618px;width:238px;height:1px;background:#808080"></div>
<div style="left:646px;top:461px;width:1px;height:158px;background:#808080"></div>
<span class="t" style="left:413px;top:467px;font-size:11px;color:#000;">Watch</span>
<svg style="position:absolute;left:578px;top:465px" width="11" height="9" viewBox="0 0 11 9"><path d="M1 1l3.5 3.5L1 8M5.5 1L9 4.5 5.5 8" fill="none" stroke="#000" stroke-width="1.4"/></svg>
<svg style="position:absolute;left:597px;top:466px" width="8" height="11" viewBox="0 0 8 11"><path d="M1.5 0.5h5l-.8 1.5v3.5l1.5 1.5h-6.5l1.5-1.5v-3.5z" fill="#e01030" stroke="#900018" stroke-width=".6"/><rect x="3.5" y="7" width="1" height="4" fill="#900018"/></svg>
<svg style="position:absolute;left:613px;top:466px" width="16" height="16" viewBox="0 0 16 16"><defs><linearGradient id="g15" x1="0" y1="0" x2="0" y2="1"><stop offset="0" stop-color="#fff"/><stop offset="1" stop-color="#e4e4ff"/></linearGradient></defs><rect x="0.5" y="0.5" width="10" height="10" fill="url(#g15)" stroke="#1a50d8"/><rect x="1" y="1" width="9" height="2" fill="#4a80f0"/></svg>
<svg style="position:absolute;left:631px;top:466px" width="16" height="16" viewBox="0 0 16 16"><path d="M0.50 2.70L2.70 0.50L5.50 3.30L8.30 0.50L10.50 2.70L7.70 5.50L10.50 8.30L8.30 10.50L5.50 7.70L2.70 10.50L0.50 8.30L3.30 5.50z" fill="#fff" stroke="#1a4ec8" stroke-width="1.1" stroke-linejoin="round"/></svg>
<div style="left:410px;top:480px;width:236px;height:101px;background:#fff"></div>
<div style="left:410px;top:480px;width:236px;height:20px;background:#d4d0c8"></div>
<div style="left:410px;top:480px;width:236px;height:1px;background:#000"></div>
<div style="left:410px;top:480px;width:1px;height:20px;background:#000"></div>
<div style="left:410px;top:499px;width:236px;height:1px;background:#000"></div>
<div style="left:411px;top:481px;width:235px;height:1px;background:#ffffff"></div>
<div style="left:411px;top:481px;width:1px;height:18px;background:#ffffff"></div>
<div style="left:411px;top:498px;width:235px;height:1px;background:#808080"></div>
<div style="left:559px;top:481px;width:1px;height:18px;background:#808080"></div>
<div style="left:560px;top:481px;width:1px;height:19px;background:#000"></div>
<div style="left:561px;top:481px;width:1px;height:18px;background:#ffffff"></div>
<span class="t" style="left:417px;top:485px;font-size:11px;color:#000;">Expression</span>
<span class="t" style="left:566px;top:485px;font-size:11px;color:#000;">Value</span>
<div style="left:411px;top:516px;width:235px;height:1px;background:#d4d0c8"></div>
<div style="left:560px;top:500px;width:1px;height:16px;background:#d4d0c8"></div>
<span class="t" style="left:433px;top:502px;font-size:11px;color:#000;">...</span>
<div style="left:410px;top:581px;width:236px;height:16px;background-color:#fff;background-image:linear-gradient(45deg,#d4d0c8 25%,transparent 25%,transparent 75%,#d4d0c8 75%),linear-gradient(45deg,#d4d0c8 25%,transparent 25%,transparent 75%,#d4d0c8 75%);background-size:2px 2px;background-position:0 0,1px 1px"></div>
<div style="left:410px;top:581px;width:16px;height:16px;background:#d4d0c8"></div>
<div style="left:410px;top:581px;width:16px;height:1px;background:#d4d0c8"></div>
<div style="left:410px;top:581px;width:1px;height:16px;background:#d4d0c8"></div>
<div style="left:410px;top:596px;width:16px;height:1px;background:#404040"></div>
<div style="left:425px;top:581px;width:1px;height:16px;background:#404040"></div>
<div style="left:411px;top:582px;width:14px;height:1px;background:#ffffff"></div>
<div style="left:411px;top:582px;width:1px;height:14px;background:#ffffff"></div>
<div style="left:411px;top:595px;width:14px;height:1px;background:#808080"></div>
<div style="left:424px;top:582px;width:1px;height:14px;background:#808080"></div>
<svg style="position:absolute;left:416px;top:585px" width="4" height="7" viewBox="0 0 4 7" shape-rendering="crispEdges"><path d="M3 0h1v7h-1v-1h-1v-1h-1v-1h-1v-1h1v-1h1v-1h1z" fill="#000"/></svg>
<div style="left:630px;top:581px;width:16px;height:16px;background:#d4d0c8"></div>
<div style="left:630px;top:581px;width:16px;height:1px;background:#d4d0c8"></div>
<div style="left:630px;top:581px;width:1px;height:16px;background:#d4d0c8"></div>
<div style="left:630px;top:596px;width:16px;height:1px;background:#404040"></div>
<div style="left:645px;top:581px;width:1px;height:16px;background:#404040"></div>
<div style="left:631px;top:582px;width:14px;height:1px;background:#ffffff"></div>
<div style="left:631px;top:582px;width:1px;height:14px;background:#ffffff"></div>
<div style="left:631px;top:595px;width:14px;height:1px;background:#808080"></div>
<div style="left:644px;top:582px;width:1px;height:14px;background:#808080"></div>
<svg style="position:absolute;left:637px;top:585px" width="4" height="7" viewBox="0 0 4 7" shape-rendering="crispEdges"><path d="M0 0h1v1h1v1h1v1h1v1h-1v1h-1v1h-1v1h-1z" fill="#000"/></svg>
<div style="left:426px;top:581px;width:71px;height:16px;background:#d4d0c8"></div>
<div style="left:426px;top:581px;width:71px;height:1px;background:#d4d0c8"></div>
<div style="left:426px;top:581px;width:1px;height:16px;background:#d4d0c8"></div>
<div style="left:426px;top:596px;width:71px;height:1px;background:#404040"></div>
<div style="left:496px;top:581px;width:1px;height:16px;background:#404040"></div>
<div style="left:427px;top:582px;width:69px;height:1px;background:#ffffff"></div>
<div style="left:427px;top:582px;width:1px;height:14px;background:#ffffff"></div>
<div style="left:427px;top:595px;width:69px;height:1px;background:#808080"></div>
<div style="left:495px;top:582px;width:1px;height:14px;background:#808080"></div>
<div style="left:410px;top:597px;width:64px;height:21px;background:#d4d0c8"></div>
<div style="left:410px;top:597px;width:1px;height:21px;background:#ffffff"></div>
<div style="left:473px;top:597px;width:1px;height:21px;background:#404040"></div>
<div style="left:474px;top:597px;width:1px;height:20px;background:#ffffff"></div>
<div style="left:547px;top:597px;width:1px;height:20px;background:#404040"></div>
<div style="left:475px;top:616px;width:73px;height:1px;background:#404040"></div>
<div style="left:549px;top:597px;width:1px;height:20px;background:#ffffff"></div>
<div style="left:643px;top:597px;width:1px;height:20px;background:#404040"></div>
<div style="left:549px;top:616px;width:95px;height:1px;background:#404040"></div>
<svg style="position:absolute;left:414px;top:600px" width="16" height="16" viewBox="0 0 16 16"><rect x="2.5" y=".5" width="13" height="10" fill="#eef0ff" stroke="#2a62d8"/><rect x="3" y="1" width="12" height="2" fill="#4a80f0"/><circle cx="4" cy="9" r="2.5" fill="#30a030"/><rect x="8" y="9" width="6" height="6" fill="#555"/></svg>
<span class="t" style="left:434px;top:603px;font-size:11px;font-weight:bold;color:#000;transform:scaleX(1.0606);transform-origin:0 0;">Watch</span>
<svg style="position:absolute;left:479px;top:600px" width="16" height="16" viewBox="0 0 16 16"><rect x=".5" y=".5" width="15" height="14" fill="#eef0ff" stroke="#2a62d8"/><rect x="1" y="1" width="14" height="2" fill="#4a80f0"/><path d="M2 12c3-6 5 2 8-3s3 0 4 1" fill="none" stroke="#2a52b8" stroke-width="1.4"/></svg>
<span class="t" style="left:497px;top:602px;font-size:11px;color:#000;">Threads</span>
<svg style="position:absolute;left:553px;top:600px" width="16" height="16" viewBox="0 0 16 16"><rect x="0.5" y="1.5" width="15" height="13" fill="#eef0ff" stroke="#2a62d8"/><rect x="1" y="2" width="14" height="2" fill="#3a7ae8"/><defs><radialGradient id="g16" cx="35%" cy="30%" r="70%"><stop offset="0" stop-color="#ff9090"/><stop offset="0.6" stop-color="#d41818"/><stop offset="1" stop-color="#980000"/></radialGradient></defs><circle cx="10.5" cy="10.5" r="5.2" fill="url(#g16)"/></svg>
<span class="t" style="left:572px;top:602px;font-size:11px;color:#000;">Breakpoints</span>
<div style="left:651px;top:89px;width:254px;height:1px;background:#808080"></div>
<div style="left:651px;top:89px;width:1px;height:530px;background:#808080"></div>
<div style="left:651px;top:618px;width:254px;height:1px;background:#808080"></div>
<div style="left:904px;top:89px;width:1px;height:530px;background:#808080"></div>
<div style="left:651px;top:89px;width:254px;height:18px;background:linear-gradient(to right,#0a246a 0px,#0a246a 61px,#d4d0c8 92px)"></div>
<div style="left:651px;top:89px;width:254px;height:1px;background:#0a246a"></div>
<div style="left:904px;top:89px;width:1px;height:18px;background:#0a246a"></div>
<div style="left:652px;top:107px;width:252px;height:1px;background:#808080"></div>
<span class="t" style="left:656px;top:95px;font-size:11px;color:#fff;transform:scaleX(0.9200);transform-origin:0 0;">Call Stack</span>
<svg style="position:absolute;left:746px;top:93px" width="11" height="11" viewBox="0 0 11 11"><rect x="0.5" y="0.5" width="10" height="10" fill="#6a6ae8" stroke="#3030b0"/><rect x="2" y="1" width="7" height="4.5" fill="#f0f0ff"/><rect x="3" y="7" width="5" height="3" fill="#b8b8e8"/><rect x="6" y="7.5" width="1" height="2" fill="#5050a0"/></svg>
<svg style="position:absolute;left:764px;top:92px" width="11" height="11" viewBox="0 0 11 11"><rect x="0.5" y="1.5" width="10" height="9" fill="#fff" stroke="#808000"/><rect x="2" y="0" width="7" height="2" fill="#b0b0b0"/></svg>
<svg style="position:absolute;left:781px;top:93px" width="12" height="12" viewBox="0 0 12 12"><rect x="0.5" y="0.5" width="11" height="11" fill="#fff" stroke="#2a62d8"/><path d="M6 2v6" stroke="#000" stroke-width="2"/><path d="M2.5 6h7L6 10z" fill="#000"/></svg>
<svg style="position:absolute;left:800px;top:93px" width="11" height="11" viewBox="0 0 11 11"><defs><radialGradient id="g17" cx="35%" cy="30%" r="70%"><stop offset="0" stop-color="#ff9090"/><stop offset="0.6" stop-color="#d41818"/><stop offset="1" stop-color="#980000"/></radialGradient></defs><circle cx="5.5" cy="5.5" r="5" fill="url(#g17)"/></svg>
<svg style="position:absolute;left:818px;top:92px" width="12" height="12" viewBox="0 0 12 12"><path d="M2 5c0 4 2 6 5 6s4-2 4-5" fill="#c0c0c0" stroke="#a8a8a8"/><path d="M7 1v5M7 1l3 2" stroke="#a8a8a8" stroke-width="1.4"/></svg>
<svg style="position:absolute;left:836px;top:93px" width="12" height="11" viewBox="0 0 12 11"><rect x="0.5" y="0.5" width="11" height="10" fill="#fff" stroke="#2a62d8"/><rect x="1" y="1" width="10" height="2" fill="#4a80f0"/><path d="M2 6.5h6" stroke="#000"/><path d="M6 4.5l2.5 2-2.5 2z" fill="#000"/><rect x="9" y="4" width="1" height="5" fill="#000"/></svg>
<svg style="position:absolute;left:857px;top:92px" width="8" height="11" viewBox="0 0 8 11"><path d="M1.5 0.5h5l-.8 1.5v3.5l1.5 1.5h-6.5l1.5-1.5v-3.5z" fill="#e01030" stroke="#900018" stroke-width=".6"/><rect x="3.5" y="7" width="1" height="4" fill="#900018"/></svg>
<svg style="position:absolute;left:872px;top:93px" width="16" height="16" viewBox="0 0 16 16"><defs><linearGradient id="g18" x1="0" y1="0" x2="0" y2="1"><stop offset="0" stop-color="#fff"/><stop offset="1" stop-color="#e4e4ff"/></linearGradient></defs><rect x="0.5" y="0.5" width="10" height="10" fill="url(#g18)" stroke="#1a50d8"/><rect x="1" y="1" width="9" height="2" fill="#4a80f0"/></svg>
<svg style="position:absolute;left:890px;top:93px" width="16" height="16" viewBox="0 0 16 16"><path d="M0.50 2.70L2.70 0.50L5.50 3.30L8.30 0.50L10.50 2.70L7.70 5.50L10.50 8.30L8.30 10.50L5.50 7.70L2.70 10.50L0.50 8.30L3.30 5.50z" fill="#fff" stroke="#1a4ec8" stroke-width="1.1" stroke-linejoin="round"/></svg>
<span class="t" style="left:654px;top:109px;font-size:11px;color:#0000ff;">Status</span>
<span class="t" style="left:688px;top:109px;font-size:11px;color:#0000ff;">=</span>
<span class="t" style="left:698px;top:109px;font-size:11px;color:#000;">Breakpoint reached</span>
<div style="left:652px;top:125px;width:229px;height:24px;background:#fff"></div>
<div style="left:652px;top:125px;width:229px;height:1px;background:#808080"></div>
<div style="left:652px;top:125px;width:1px;height:24px;background:#808080"></div>
<div style="left:652px;top:148px;width:229px;height:1px;background:#ffffff"></div>
<div style="left:880px;top:125px;width:1px;height:24px;background:#ffffff"></div>
<div style="left:653px;top:126px;width:227px;height:1px;background:#404040"></div>
<div style="left:653px;top:126px;width:1px;height:22px;background:#404040"></div>
<div style="left:653px;top:147px;width:227px;height:1px;background:#d4d0c8"></div>
<div style="left:879px;top:126px;width:1px;height:22px;background:#d4d0c8"></div>
<svg style="position:absolute;left:884px;top:130px" width="16" height="15" viewBox="0 0 16 15"><rect x="1.5" y="1.5" width="11" height="9" rx="2" fill="none" stroke="#b8b8b8" stroke-width="1.3"/><circle cx="9" cy="10" r="4" fill="#d4d0c8" stroke="#b8b8b8" stroke-width="1.3"/></svg>
<div style="left:652px;top:149px;width:252px;height:432px;background:#fff"></div>
<div style="left:652px;top:149px;width:252px;height:20px;background:#d4d0c8"></div>
<div style="left:652px;top:149px;width:252px;height:1px;background:#000"></div>
<div style="left:652px;top:149px;width:1px;height:20px;background:#000"></div>
<div style="left:652px;top:168px;width:252px;height:1px;background:#000"></div>
<div style="left:653px;top:150px;width:251px;height:1px;background:#ffffff"></div>
<div style="left:653px;top:150px;width:1px;height:18px;background:#ffffff"></div>
<div style="left:653px;top:167px;width:251px;height:1px;background:#808080"></div>
<div style="left:771px;top:150px;width:1px;height:18px;background:#808080"></div>
<div style="left:772px;top:150px;width:1px;height:19px;background:#000"></div>
<div style="left:773px;top:150px;width:1px;height:18px;background:#ffffff"></div>
<div style="left:871px;top:150px;width:1px;height:18px;background:#808080"></div>
<div style="left:872px;top:150px;width:1px;height:19px;background:#000"></div>
<div style="left:873px;top:150px;width:1px;height:18px;background:#ffffff"></div>
<span class="t" style="left:659px;top:153px;font-size:11px;color:#000;">In Feature</span>
<span class="t" style="left:779px;top:153px;font-size:11px;color:#000;">In Class</span>
<span class="t" style="left:879px;top:153px;font-size:11px;color:#000;">From</span>
<div style="left:653px;top:169px;width:250px;height:16px;background:#ffffa8"></div>
<div style="left:772px;top:169px;width:1px;height:16px;background:#e0e0b0"></div>
<div style="left:872px;top:169px;width:1px;height:16px;background:#e0e0b0"></div>
<div style="left:653px;top:185px;width:250px;height:1px;background:#d8d8dc"></div>
<svg style="position:absolute;left:656px;top:172px" width="11" height="11" viewBox="0 0 11 11"><path d="M1 .5v10L10 5.5z" fill="#30b030" stroke="#108010" stroke-width=".8"/></svg>
<span class="t" style="left:672px;top:171px;font-size:11px;color:#000;">make</span>
<span class="t" style="left:775px;top:171px;font-size:11px;color:#000;transform:scaleX(0.9500);transform-origin:0 0;">TESTROOT</span>
<div style="left:873px;top:169px;width:30px;height:16px;overflow:hidden"><span class="t" style="left:2px;top:2px;font-size:11px;color:#c0c0a0;transform:scaleX(0.95);transform-origin:0 0">TESTROOT</span></div>
<svg style="position:absolute;left:762px;top:175px" width="7" height="8" viewBox="0 0 7 8"><path d="M3.5 .5C2 3 1 4 1 5.3a2.5 2.5 0 0 0 5 0C6 4 5 3 3.5 .5z" fill="#b0c0ff" stroke="#5060e0" stroke-width=".7"/></svg>
<div style="left:652px;top:581px;width:252px;height:16px;background-color:#fff;background-image:linear-gradient(45deg,#d4d0c8 25%,transparent 25%,transparent 75%,#d4d0c8 75%),linear-gradient(45deg,#d4d0c8 25%,transparent 25%,transparent 75%,#d4d0c8 75%);background-size:2px 2px;background-position:0 0,1px 1px"></div>
<div style="left:652px;top:581px;width:16px;height:16px;background:#d4d0c8"></div>
<div style="left:652px;top:581px;width:16px;height:1px;background:#d4d0c8"></div>
<div style="left:652px;top:581px;width:1px;height:16px;background:#d4d0c8"></div>
<div style="left:652px;top:596px;width:16px;height:1px;background:#404040"></div>
<div style="left:667px;top:581px;width:1px;height:16px;background:#404040"></div>
<div style="left:653px;top:582px;width:14px;height:1px;background:#ffffff"></div>
<div style="left:653px;top:582px;width:1px;height:14px;background:#ffffff"></div>
<div style="left:653px;top:595px;width:14px;height:1px;background:#808080"></div>
<div style="left:666px;top:582px;width:1px;height:14px;background:#808080"></div>
<svg style="position:absolute;left:658px;top:585px" width="4" height="7" viewBox="0 0 4 7" shape-rendering="crispEdges"><path d="M3 0h1v7h-1v-1h-1v-1h-1v-1h-1v-1h1v-1h1v-1h1z" fill="#000"/></svg>
<div style="left:888px;top:581px;width:16px;height:16px;background:#d4d0c8"></div>
<div style="left:888px;top:581px;width:16px;height:1px;background:#d4d0c8"></div>
<div style="left:888px;top:581px;width:1px;height:16px;background:#d4d0c8"></div>
<div style="left:888px;top:596px;width:16px;height:1px;background:#404040"></div>
<div style="left:903px;top:581px;width:1px;height:16px;background:#404040"></div>
<div style="left:889px;top:582px;width:14px;height:1px;background:#ffffff"></div>
<div style="left:889px;top:582px;width:1px;height:14px;background:#ffffff"></div>
<div style="left:889px;top:595px;width:14px;height:1px;background:#808080"></div>
<div style="left:902px;top:582px;width:1px;height:14px;background:#808080"></div>
<svg style="position:absolute;left:895px;top:585px" width="4" height="7" viewBox="0 0 4 7" shape-rendering="crispEdges"><path d="M0 0h1v1h1v1h1v1h1v1h-1v1h-1v1h-1v1h-1z" fill="#000"/></svg>
<div style="left:668px;top:581px;width:163px;height:16px;background:#d4d0c8"></div>
<div style="left:668px;top:581px;width:163px;height:1px;background:#d4d0c8"></div>
<div style="left:668px;top:581px;width:1px;height:16px;background:#d4d0c8"></div>
<div style="left:668px;top:596px;width:163px;height:1px;background:#404040"></div>
<div style="left:830px;top:581px;width:1px;height:16px;background:#404040"></div>
<div style="left:669px;top:582px;width:161px;height:1px;background:#ffffff"></div>
<div style="left:669px;top:582px;width:1px;height:14px;background:#ffffff"></div>
<div style="left:669px;top:595px;width:161px;height:1px;background:#808080"></div>
<div style="left:829px;top:582px;width:1px;height:14px;background:#808080"></div>
<div style="left:652px;top:597px;width:83px;height:21px;background:#d4d0c8"></div>
<div style="left:652px;top:597px;width:1px;height:21px;background:#ffffff"></div>
<div style="left:734px;top:597px;width:1px;height:21px;background:#404040"></div>
<div style="left:735px;top:597px;width:1px;height:20px;background:#ffffff"></div>
<div style="left:812px;top:597px;width:1px;height:20px;background:#404040"></div>
<div style="left:736px;top:616px;width:77px;height:1px;background:#404040"></div>
<div style="left:817px;top:597px;width:1px;height:20px;background:#ffffff"></div>
<div style="left:895px;top:597px;width:1px;height:20px;background:#404040"></div>
<div style="left:817px;top:616px;width:79px;height:1px;background:#404040"></div>
<svg style="position:absolute;left:656px;top:600px" width="16" height="16" viewBox="0 0 16 16"><rect x=".5" y=".5" width="10" height="8" fill="#eef0ff" stroke="#2a62d8"/><rect x="3.5" y="3.5" width="10" height="8" fill="#eef0ff" stroke="#2a62d8"/><rect x="5.5" y="6.5" width="10" height="9" fill="#eef0ff" stroke="#2a62d8"/></svg>
<span class="t" style="left:675px;top:603px;font-size:11px;font-weight:bold;color:#000;">Call Stack</span>
<svg style="position:absolute;left:739px;top:601px" width="16" height="16" viewBox="0 0 16 16"><rect x=".5" y=".5" width="15" height="14" fill="#fff" stroke="#2a62d8"/><rect x="1" y="1" width="14" height="2" fill="#4a80f0"/><path d="M3 7l2 1.5L3 10" fill="none" stroke="#000"/><rect x="6" y="10" width="3" height="1" fill="#000"/><rect x="9" y="5" width="5" height="1" fill="#444"/><rect x="9" y="8" width="5" height="1" fill="#444"/></svg>
<span class="t" style="left:759px;top:602px;font-size:11px;color:#000;">AutoTest</span>
<svg style="position:absolute;left:820px;top:600px" width="16" height="16" viewBox="0 0 16 16"><path d="M.5 3.5l2-2h5l1 2h7v12h-15z" fill="#f8e840" stroke="#909000"/><path d="M8 5l1.3 2.7 3 .3-2.2 2 .7 3L8 11.5 5.2 13l.7-3-2.2-2 3-.3z" fill="#f8d020" stroke="#a08000" stroke-width=".6"/></svg>
<span class="t" style="left:839px;top:602px;font-size:11px;color:#000;">Favorites</span>
<div style="left:4px;top:619px;width:901px;height:25px;background:#eae8e4"></div>
<div style="left:4px;top:619px;width:901px;height:1px;background:#b4b4b4"></div>
<div style="left:4px;top:624px;width:67px;height:20px;background:#d4d0c8"></div>
<div style="left:4px;top:624px;width:67px;height:1px;background:#808080"></div>
<div style="left:4px;top:624px;width:1px;height:20px;background:#808080"></div>
<div style="left:70px;top:624px;width:1px;height:20px;background:#808080"></div>
<span class="t" style="left:28px;top:627px;font-size:11px;color:#000;transform:scaleX(0.9048);transform-origin:0 0;">Diagram</span>
<div style="left:81px;top:624px;width:89px;height:20px;background:#d4d0c8"></div>
<div style="left:81px;top:624px;width:89px;height:1px;background:#808080"></div>
<div style="left:81px;top:624px;width:1px;height:20px;background:#808080"></div>
<div style="left:169px;top:624px;width:1px;height:20px;background:#808080"></div>
<span class="t" style="left:106px;top:627px;font-size:11px;color:#000;transform:scaleX(0.9677);transform-origin:0 0;">Dependency</span>
<div style="left:169px;top:624px;width:62px;height:20px;background:#d4d0c8"></div>
<div style="left:169px;top:624px;width:62px;height:1px;background:#808080"></div>
<div style="left:169px;top:624px;width:1px;height:20px;background:#808080"></div>
<div style="left:230px;top:624px;width:1px;height:20px;background:#808080"></div>
<span class="t" style="left:194px;top:627px;font-size:11px;color:#000;transform:scaleX(0.9444);transform-origin:0 0;">Metrics</span>
<div style="left:241px;top:624px;width:71px;height:20px;background:#d4d0c8"></div>
<div style="left:241px;top:624px;width:71px;height:1px;background:#808080"></div>
<div style="left:241px;top:624px;width:1px;height:20px;background:#808080"></div>
<div style="left:311px;top:624px;width:1px;height:20px;background:#808080"></div>
<span class="t" style="left:266px;top:627px;font-size:11px;color:#000;transform:scaleX(0.9333);transform-origin:0 0;">Error List</span>
<svg style="position:absolute;left:10px;top:626px" width="16" height="16" viewBox="0 0 16 16"><path d="M2 12l8-9 3 2.5-8 9-3.5 1z" fill="#30c030" stroke="#108010" stroke-width=".8"/><path d="M10 3l1.5-2 3 2.5-1.5 2z" fill="#e84020"/><path d="M2 12l3 2.5-3.5 1z" fill="#e0d040"/><rect x="0" y="15" width="13" height="1" fill="#3050e0"/></svg>
<svg style="position:absolute;left:85px;top:627px" width="16" height="13" viewBox="0 0 16 13"><path d="M1 4.5h7M1 8.5h7" stroke="#20a020" stroke-width="2"/><path d="M7.5 .5l7.5 6-7.5 6z" fill="#38c038" stroke="#108010" stroke-width=".8"/><path d="M1 4.5h7M1 8.5h7" stroke="#60e060" stroke-width=".8"/></svg>
<svg style="position:absolute;left:174px;top:626px" width="16" height="16" viewBox="0 0 16 16"><rect x=".5" y=".5" width="15" height="14" fill="#fff" stroke="#2a62d8"/><rect x="1" y="1" width="14" height="2" fill="#5a8af0"/><circle cx="10" cy="10" r="5" fill="#e0d040"/><path d="M10 10V5a5 5 0 0 1 5 5z" fill="#40a040"/><path d="M10 10h5a5 5 0 0 1-8 4z" fill="#e04040"/></svg>
<svg style="position:absolute;left:245px;top:626px" width="16" height="16" viewBox="0 0 16 16"><rect x="1.5" y="2.5" width="11" height="12" rx="1.5" fill="#f4f4f4" stroke="#909020"/><rect x="4" y="1" width="6" height="3" fill="#a0a0a0"/><rect x="3.5" y="6" width="7" height="1" fill="#909090"/><rect x="3.5" y="8" width="5" height="1" fill="#909090"/><defs><radialGradient id="g19" cx="35%" cy="30%" r="70%"><stop offset="0" stop-color="#ff9090"/><stop offset="0.6" stop-color="#d41818"/><stop offset="1" stop-color="#980000"/></radialGradient></defs><circle cx="11.5" cy="11.5" r="4.5" fill="url(#g19)"/><path d="M10 10l3 3M13 10l-3 3" stroke="#fff" stroke-width="1.3"/></svg>
<div style="left:4px;top:646px;width:611px;height:1px;background:#808080"></div>
<div style="left:4px;top:646px;width:1px;height:18px;background:#808080"></div>
<div style="left:4px;top:663px;width:611px;height:1px;background:#ffffff"></div>
<div style="left:614px;top:646px;width:1px;height:18px;background:#ffffff"></div>
<span class="t" style="left:6px;top:649px;font-size:11px;color:#000;">Breakpoint reached</span>
<div style="left:617px;top:646px;width:98px;height:1px;background:#808080"></div>
<div style="left:617px;top:646px;width:1px;height:18px;background:#808080"></div>
<div style="left:617px;top:663px;width:98px;height:1px;background:#ffffff"></div>
<div style="left:714px;top:646px;width:1px;height:18px;background:#ffffff"></div>
<div style="left:718px;top:646px;width:75px;height:1px;background:#808080"></div>
<div style="left:718px;top:646px;width:1px;height:18px;background:#808080"></div>
<div style="left:718px;top:663px;width:75px;height:1px;background:#ffffff"></div>
<div style="left:792px;top:646px;width:1px;height:18px;background:#ffffff"></div>
<span class="t" style="left:722px;top:649px;font-size:11px;color:#000;">simple:classic</span>
<div style="left:795px;top:646px;width:50px;height:1px;background:#808080"></div>
<div style="left:795px;top:646px;width:1px;height:18px;background:#808080"></div>
<div style="left:795px;top:663px;width:50px;height:1px;background:#ffffff"></div>
<div style="left:844px;top:646px;width:1px;height:18px;background:#ffffff"></div>
<span class="t" style="left:811px;top:649px;font-size:11px;color:#808080;">0:0</span>
<div style="left:847px;top:646px;width:18px;height:1px;background:#808080"></div>
<div style="left:847px;top:646px;width:1px;height:18px;background:#808080"></div>
<div style="left:847px;top:663px;width:18px;height:1px;background:#ffffff"></div>
<div style="left:864px;top:646px;width:1px;height:18px;background:#ffffff"></div>
<div style="left:867px;top:646px;width:19px;height:1px;background:#808080"></div>
<div style="left:867px;top:646px;width:1px;height:18px;background:#808080"></div>
<div style="left:867px;top:663px;width:19px;height:1px;background:#ffffff"></div>
<div style="left:885px;top:646px;width:1px;height:18px;background:#ffffff"></div>
<div style="left:887px;top:646px;width:18px;height:1px;background:#808080"></div>
<div style="left:887px;top:646px;width:1px;height:18px;background:#808080"></div>
<div style="left:887px;top:663px;width:18px;height:1px;background:#ffffff"></div>
<div style="left:904px;top:646px;width:1px;height:18px;background:#ffffff"></div>
<svg style="position:absolute;left:848px;top:647px" width="16" height="16" viewBox="0 0 16 16"><path d="M1.5 0.5h8l4 4v10h-12z" fill="#f4f4ff" stroke="#2a62d8" stroke-width="1"/><path d="M9.5 0.5v4h4" fill="#fff" stroke="#2a62d8" stroke-width="1"/><path d="M1.5 8.5l4 4.5 9-9" fill="none" stroke="#109010" stroke-width="3"/><path d="M1.5 8.5l4 4.5 9-9" fill="none" stroke="#40c040" stroke-width="1.2"/></svg>
<svg style="position:absolute;left:869px;top:647px" width="16" height="16" viewBox="0 0 16 16"><path d="M.5 10.5l6-3.5 8 3.5-6 4z" fill="#a8a8d0" stroke="#7070b0"/><path d="M.5 8.5l6-3.5 8 3.5-6 4z" fill="#c8c8e8" stroke="#7070b0"/><path d="M.5 6.5l6-3.5 8 3.5-6 4z" fill="#fff" stroke="#7070b0"/><path d="M3 6l3.5 3.5 8.5-8" fill="none" stroke="#109010" stroke-width="3"/><path d="M3 6l3.5 3.5 8.5-8" fill="none" stroke="#40c040" stroke-width="1.2"/></svg>
<svg style="position:absolute;left:890px;top:649px" width="13" height="13" viewBox="0 0 13 13"><defs><linearGradient id="pb" x1="0" x2="1"><stop offset="0" stop-color="#2050c0"/><stop offset=".4" stop-color="#80b0ff"/><stop offset="1" stop-color="#1848b0"/></linearGradient></defs><rect x=".5" y=".5" width="4" height="12" fill="url(#pb)" stroke="#103090"/><rect x="7.5" y=".5" width="4" height="12" fill="url(#pb)" stroke="#103090"/></svg>
</body></html>
